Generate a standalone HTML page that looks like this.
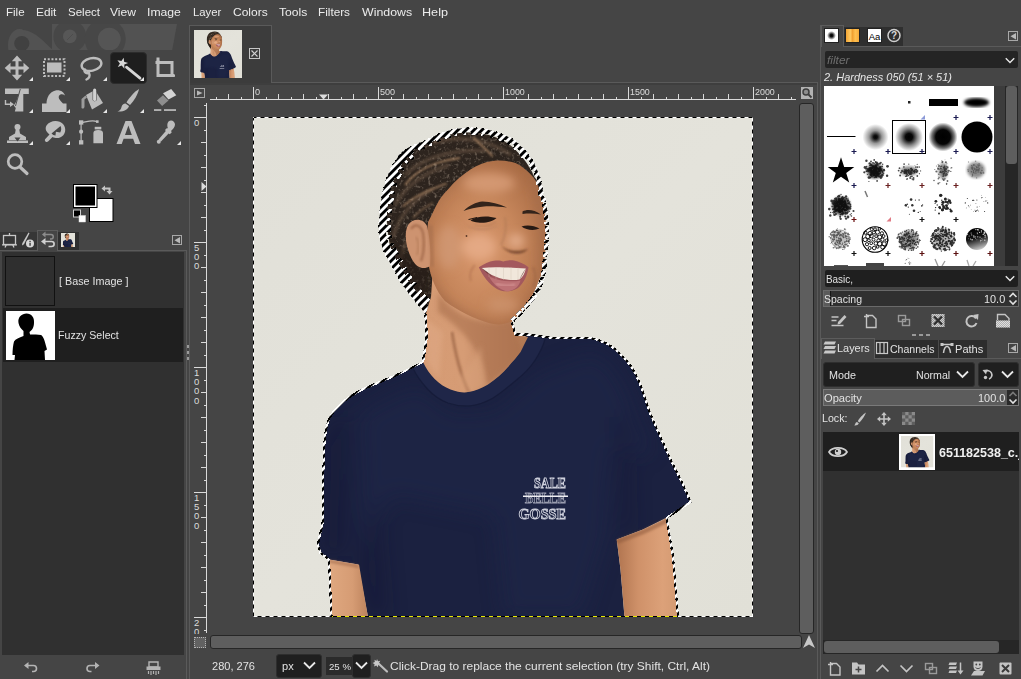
<!DOCTYPE html>
<html><head><meta charset="utf-8"><title>GIMP</title>
<style>
*{box-sizing:border-box;margin:0;padding:0}
html,body{width:1021px;height:679px;overflow:hidden;background:#454545}
body{position:relative;font-family:"Liberation Sans",sans-serif;font-size:12px;color:#e4e4e4}
.a{position:absolute}
.t{position:absolute;white-space:nowrap;line-height:14.6px;font-size:11.4px;color:#e2e2e2}
svg{position:absolute;overflow:visible}
.menu span{position:absolute;top:5px;line-height:14.4px;font-size:11.6px;color:#ececec;white-space:nowrap}
.ic{fill:#bdbdbd}
.st{fill:none;stroke:#bdbdbd}
</style></head><body>
<!-- MENUBAR -->
<div class="a menu" style="left:0;top:0;width:1021px;height:23px">
<span style="transform:scaleX(0.9953);transform-origin:0 0;left:5.5px">File</span><span style="transform:scaleX(1.0208);transform-origin:0 0;left:35.9px">Edit</span><span style="transform:scaleX(0.9927);transform-origin:0 0;left:67.5px">Select</span><span style="transform:scaleX(1.0433);transform-origin:0 0;left:110.2px">View</span><span style="transform:scaleX(1.0517);transform-origin:0 0;left:147.4px">Image</span><span style="transform:scaleX(0.9753);transform-origin:0 0;left:192.9px">Layer</span><span style="transform:scaleX(1.0353);transform-origin:0 0;left:232.8px">Colors</span><span style="transform:scaleX(1.0451);transform-origin:0 0;left:278.9px">Tools</span><span style="transform:scaleX(1.0139);transform-origin:0 0;left:318.4px">Filters</span><span style="transform:scaleX(1.0649);transform-origin:0 0;left:361.6px">Windows</span><span style="transform:scaleX(1.0897);transform-origin:0 0;left:422.4px">Help</span>
</div>
<!-- LEFT PANEL -->
<!-- wilber banner -->
<svg style="left:0;top:23px" width="185" height="30" viewBox="0 23 185 30">
<defs><clipPath id="wb"><polygon points="8,24 177,24 172.200,50 8,50"/></clipPath></defs>
<g clip-path="url(#wb)">
<rect x="52" y="24" width="126" height="26" fill="#525252"/>
<ellipse cx="19.500" cy="45" rx="11.500" ry="16" fill="#525252"/>
<path d="M24,30 C36,32 44,42 54,51 L26,51Z" fill="#525252"/>
<circle cx="21.800" cy="43.500" r="7.600" fill="#414141"/>
<circle cx="69.800" cy="36.400" r="16.400" fill="#474747"/>
<circle cx="69.800" cy="36.400" r="6.800" fill="#575757"/>
<path d="M67,40l6,-6" stroke="#4d4d4d" stroke-width="1"/>
<circle cx="105.200" cy="39.100" r="20.500" fill="#474747"/>
<circle cx="109.300" cy="39.100" r="11.400" fill="#555555"/>
</g></svg>

<!-- selected tool bg -->
<div class="a" style="left:110px;top:52px;width:37px;height:32px;background:#1e1e1e;border-radius:4px;border:1px solid #2c2c2c"></div>

<svg id="tools" style="left:0;top:0" width="185" height="230" viewBox="0 0 185 230">
<g fill="#e6e6e6">
<!-- group triangles -->
<path d="M33,77v4h-4z M70,77v4h-4z M107,77v4h-4z M144,77v4h-4z M175,74.5v2h-1.5z
M33,109v4h-4z M70,109v4h-4z M107,109v4h-4z M144,109v4h-4z
M33,141v4h-4z M70,141v4h-4z M181,141v4h-4z"/>
</g>
<g fill="#bdbdbd" stroke="none">
<!-- 1 move (center 17.5,68) -->
<path d="M17,55.500l5.200,5.800h-3.700v5.200h5v-3.700l5.800,5.200l-5.800,5.200v-3.700h-5v5.200h3.700l-5.200,5.800l-5.200,-5.800h3.700v-5.200h-5v3.700l-5.800,-5.200l5.800,-5.200v3.700h5v-5.200h-3.700z"/>
<!-- 2 rect select (center 54.5,68) -->
<rect x="47" y="62.500" width="14.500" height="10"/>
<path d="M43,58h23v20h-23z M45,60v16h19v-16z" fill-rule="evenodd" fill="none" stroke="#bdbdbd" stroke-width="2" stroke-dasharray="2 1.500" transform="translate(0,0)" style="display:none"/>
</g>
<rect x="44" y="59.200" width="20.500" height="16.800" fill="none" stroke="#bdbdbd" stroke-width="2" stroke-dasharray="2 1.730"/>
<!-- 3 lasso -->
<g fill="none" stroke="#bdbdbd" stroke-width="2.400" stroke-linecap="round">
<ellipse cx="91.500" cy="64.500" rx="10" ry="6.300" transform="rotate(-12 91.500 64.500)"/>
<path d="M85,69.500c-1.500,2.500 1.500,4.500 4,3.500c1.500,3 0,5.500 -2.500,6.500" />
</g>
<!-- 4 fuzzy wand -->
<g>
<polygon points="123.7,57.7 124.1,61.8 128.1,62.9 124.3,64.6 124.4,68.7 121.7,65.6 117.8,67.0 119.9,63.5 117.4,60.2 121.4,61.1" fill="#d6d6d6"/>
<path d="M126.500,67.200l13.500,11" stroke="#d6d6d6" stroke-width="2.800" stroke-linecap="round" fill="none"/>
</g>
<!-- 5 crop -->
<g fill="none" stroke="#bdbdbd" stroke-width="3">
<path d="M158,60v15.500h16.500"/>
<path d="M155.500,62.500h16.500v14" />
</g>
<rect x="156.500" y="57.500" width="3" height="3" fill="#bdbdbd"/>
<!-- 6 unified transform -->
<g fill="#bdbdbd">
<path d="M5,88.600h23.800v5.400h-5.500v17.500h-8.500l1,-3.500l-2,-2.500l2.500,-4l2.500,-7.500h-13.800z"/>
<path d="M20.300,89l-4.800,17" stroke="#454545" stroke-width="0.900" fill="none"/>
<path d="M5.500,100v4.300h5" stroke="#bdbdbd" stroke-width="1.400" fill="none"/>
<path d="M10,101.500l4,2.800l-4,2.800z"/>
</g>
<!-- 7 warp -->
<path d="M42,112v-8.500h4.500c0,-6 3,-11.500 9,-13c4.500,-1 8.500,1.500 9.500,5c-2,-1.800 -5,-1.800 -6,0.300c-1.200,2.500 1.500,5.200 4,7.700h3.500v8.500z" fill="#bdbdbd"/>
<!-- 8 bucket -->
<g fill="#bdbdbd">
<path d="M86,95l9,-5l8,13l-11,6.500z"/>
<rect x="92.600" y="88.300" width="4.100" height="13" rx="1.800" fill="#454545"/><rect x="93.100" y="88.600" width="3.100" height="12.400" rx="1.500" fill="#d2d2d2"/>
<path d="M85.500,95.500l-4,3.500v9c1.500,1.500 3,0 3,-1.500v-7l2.500,-2z" fill="#9c9c9c"/>
</g>
<!-- 9 paintbrush -->
<g fill="#bdbdbd">
<path d="M139,89c-1,5 -5,12 -9,16l-3.500,-2.500c2,-4 8,-11 12.500,-13.500z"/>
<path d="M125.500,103.500l3.500,2.500c-1,3.500 -5.500,6 -11.500,5.500c2.500,-1 3.500,-2.500 4,-4.500c0.500,-2 2,-3.500 4,-3.500z"/>
</g>
<!-- 10 eraser -->
<g>
<path d="M163,93.200l8.200,-4.100l5.100,6.200l-7.800,4.200z" fill="#d4d4d4"/>
<path d="M157,100.400l6,-5.100l5.500,5.100l-6.400,5.500z" fill="#8e8e8e"/>
<rect x="154" y="109.200" width="7.300" height="1.700" fill="#bdbdbd"/><rect x="164" y="109.200" width="12" height="1.700" fill="#bdbdbd"/>
</g>
<!-- 11 clone stamp -->
<g fill="#bdbdbd">
<circle cx="17.500" cy="127" r="3"/>
<path d="M16,128h3l1,5.500l6,3.500v3h-17v-3l6,-3.500z"/>
<path d="M7,142h21v2.500h-21z" transform="translate(0,-1.500)"/>
<path d="M14.500,137.500h6l-3,4z" fill="#454545"/>
</g>
<!-- 12 smudge / dodge -->
<g fill="#bdbdbd">
<path d="M46.500,125.500c3.500,-5.500 12.500,-6 16.500,-1.500c4,4.500 2.500,11.500 -3,13.500c-2.500,1 -5.500,0.500 -7.500,-0.500l-4.500,4.500c-1.500,1.500 -4.200,-0.800 -2.700,-2.600l4.200,-4.400c-3,-2.500 -5,-5.500 -3,-9z"/>
<path d="M51.500,133.500l9,-7.500c1.200,2.200 0.800,4.800 -0.300,6.500l-4.300,-0.700l-0.400,3.700c-1.600,0 -2.900,-0.900 -4,-2z" fill="#454545"/>
</g>
<!-- 13 paths -->
<g fill="#bdbdbd">
<rect x="79" y="120.300" width="4.300" height="4.300"/>
<rect x="79" y="140.200" width="4.300" height="4.300"/>
<circle cx="81.100" cy="131.700" r="2.100"/>
<path d="M81.100,124v17" stroke="#bdbdbd" stroke-width="1.200"/>
<path d="M83,122.300c5,-1 10,-2.500 13.500,-0.800" fill="none" stroke="#bdbdbd" stroke-width="1.300"/>
<rect x="96" y="120.300" width="2.600" height="2.600"/>
<rect x="94.700" y="126.800" width="6.600" height="2.600"/>
<path d="M93.400,133c0,-2 1.500,-3 4.800,-3s4.800,1 4.800,3v10.300h-9.600z"/>
</g>
<!-- 14 text A -->
<path d="M125.500,121h6l9,23h-5.500l-1.900,-5.300h-9.500l-1.900,5.300h-5.200z M128.400,125.500l-3.400,9.400h6.800z" fill="#bdbdbd" fill-rule="evenodd"/>
<!-- 15 color picker -->
<g fill="#bdbdbd">
<path d="M168.500,121.500c2.500,-2.500 6.500,-0.500 6.500,3c0,2.500 -2,4.500 -4,6.500l0.800,1.200l-2,2l-1.200,-0.800l-7.600,8.100l-2.500,-2l7.300,-8.400l-0.800,-1.200l2,-2l1,0.600c-1,-2.500 -1,-5 0.500,-7z"/>
<circle cx="158.800" cy="141.800" r="2"/>
</g>
<!-- 16 zoom -->
<g fill="none" stroke="#bdbdbd">
<circle cx="15" cy="161.500" r="6.800" stroke-width="2.700"/>
<path d="M20,167l7,6.500" stroke-width="3.200" stroke-linecap="round"/>
</g>

<!-- fg/bg -->
<rect x="89" y="198" width="24.500" height="24" fill="#000"/>
<rect x="90" y="199" width="22.500" height="22" fill="#fff"/>
<rect x="73" y="184" width="24.500" height="24" fill="#000"/>
<rect x="74" y="185" width="22.500" height="22" fill="#fff"/>
<rect x="75.500" y="186.500" width="19.500" height="19" fill="#000"/>
<rect x="73.500" y="210" width="7" height="7" fill="#000" stroke="#cfcfcf" stroke-width="1"/>
<rect x="79" y="215.500" width="6.500" height="6.500" fill="#fff" stroke="#dcdcdc" stroke-width="0.500"/>
<g fill="#c4c4c4">
<path d="M101.500,188.500l3.500,-3v2h5.500v3.500h2l-3,3.500l-3,-3.500h2v-1.500h-3.500v2z"/>
</g>
</svg>

<!-- dock tabs -->
<div class="a" style="left:0;top:232px;width:37px;height:18px;background:#363636"></div>
<div class="a" style="left:58px;top:232px;width:21px;height:18px;background:#2f2f2f"></div>
<div class="a" style="left:0;top:250px;width:187px;height:1px;background:#5a5a5a"></div>
<div class="a" style="left:37px;top:230px;width:21px;height:21px;background:#454545;border:1px solid #5c5c5c;border-bottom:none"></div>
<svg style="left:0;top:228px" width="185" height="24" viewBox="0 228 185 24">
<!-- tool options -->
<g fill="none" stroke="#c8c8c8" stroke-width="1.300">
<rect x="3.500" y="235.500" width="12" height="9"/>
<path d="M5,247.500l1.500,-3 M14,247.500l-1.500,-3 M2,244.800h15 M9.500,235v-2"/>
</g>
<!-- device status -->
<path d="M28.500,232.500l1,0.800l-5.500,11l-2,1.200l0.300,-2.300z" fill="#c8c8c8"/>
<circle cx="30" cy="243.500" r="4" fill="#d8d8d8"/>
<rect x="29.400" y="242.800" width="1.300" height="3" fill="#333"/><rect x="29.400" y="240.800" width="1.300" height="1.300" fill="#333"/>
<!-- undo history -->
<g fill="none" stroke="#8c8c8c" stroke-width="1.500">
<path d="M45,234.500h6c3,0 3,4.500 0,4.500h-1"/>
</g>
<path d="M45.500,231.500v6l-3.500,-3z" fill="#8c8c8c"/>
<g fill="none" stroke="#d0d0d0" stroke-width="1.600">
<path d="M44,241.500h7.500c3.500,0 3.500,5 0,5h-3"/>
</g>
<path d="M45.500,238v7l-4.500,-3.500z" fill="#d0d0d0"/>
<!-- images tab thumb -->
<svg x="61" y="233" width="14" height="14" viewBox="0 0 500 500"><use href="#pic"/></svg>
<!-- menu btn -->
<rect x="172.500" y="235.500" width="9" height="9" fill="none" stroke="#a8a8a8" stroke-width="1"/>
<path d="M180,237v6.500l-5.500,-3.250z" fill="#b8b8b8"/>
</svg>

<!-- undo list -->
<div class="a" style="left:2px;top:252px;width:182px;height:403px;background:#303030"></div>
<div class="a" style="left:5px;top:256px;width:50px;height:50px;background:#2f2f2f;border:1px solid #111"></div>
<div class="t" style="transform:scaleX(0.9462);transform-origin:0 0;left:58.800px;top:273.600px">[ Base Image ]</div>
<div class="a" style="left:3px;top:308px;width:180px;height:54px;background:#1f1f1f"></div>
<svg style="left:5.500px;top:311px" width="49" height="49" viewBox="0 0 49 49">
<rect width="49" height="49" fill="#fff"/>
<path d="M12.500,12c-1,-6 3.500,-9.500 8,-9.500c5,0 8,4 7.500,9c0,4 -1,7 -4.500,9.500l0.500,2.500c4,0 8,-0.500 11,0.500c3,1.500 4.500,9 6,14.500l-2.500,1.500l0.500,9h-30.500l0.500,-5h-2.500c0,-5 0.500,-10 1.500,-13.500c1.500,-2.500 5,-4 9.500,-5.500l0,-5c-2.500,-2 -4.500,-5 -5,-8z" fill="#000"/>
</svg>
<div class="t" style="transform:scaleX(0.9325);transform-origin:0 0;left:57.6px;top:328.3px">Fuzzy Select</div>

<!-- bottom buttons -->
<svg style="left:0;top:656px" width="185" height="23" viewBox="0 656 185 23">
<g fill="none" stroke="#b4b4b4" stroke-width="1.600">
<path d="M27,665.500h6.500c4,0 4,6 0,6h-1.500"/>
<path d="M96.500,665.500h-6.500c-4,0 -4,6 0,6h1.500" />
</g>
<path d="M28.500,662v7l-4.500,-3.500z M95,662v7l4.500,-3.500z" fill="#b4b4b4"/>
<g fill="#b4b4b4">
<path d="M149,662h9v5h-9z" fill="none" stroke="#b4b4b4" stroke-width="1.400"/>
<rect x="146.500" y="666.500" width="14" height="3.500"/>
<path d="M148.500,671v3 M151,671v4 M153.500,671v3 M156,671v4 M158.500,671v3" stroke="#b4b4b4" stroke-width="1.200"/>
</g>
</svg>

<!-- separator -->
<div class="a" style="left:186px;top:250px;width:1px;height:429px;background:#5a5a5a"></div>
<div class="a" style="left:189px;top:25px;width:1px;height:654px;background:#5a5a5a"></div>
<div class="a" style="left:187px;top:345px;width:2px;height:3px;background:#9a9a9a"></div>
<div class="a" style="left:187px;top:351px;width:2px;height:3px;background:#9a9a9a"></div>
<div class="a" style="left:187px;top:357px;width:2px;height:3px;background:#9a9a9a"></div>

<!-- CENTER -->
<!-- image tab -->
<div class="a" style="left:189px;top:25px;width:83px;height:59px;background:#3c3c3c;border:1px solid #5a5a5a;border-bottom:none"></div>
<div class="a" style="left:271px;top:82px;width:547px;height:1px;background:#5a5a5a"></div>
<div class="a" style="left:190px;top:83px;width:628px;height:2px;background:#3e3e3e"></div>
<svg style="left:194px;top:30px" width="48" height="48" viewBox="0 0 500 500"><use href="#pic"/></svg>
<svg style="left:249px;top:48px" width="12" height="12" viewBox="0 0 12 12"><rect x="0.5" y="0.5" width="10" height="10" fill="none" stroke="#c6c6c6" stroke-width="1"/><path d="M2.5,2.5l6,6M8.5,2.5l-6,6" stroke="#d0d0d0" stroke-width="1.200"/></svg>

<!-- rulers -->
<svg style="left:190px;top:85px" width="628" height="550" viewBox="190 85 628 550" shape-rendering="crispEdges">
<rect x="194.500" y="88.500" width="10" height="9" fill="none" stroke="#a8a8a8"/>
<path d="M197,90.500l5.500,2.500l-5.500,2.500z" fill="#b8b8b8" shape-rendering="auto"/>
<path d="M210,99.5h586" stroke="#dadada" stroke-width="1"/>
<path d="M216.0,96.500v3.500 M228.5,94v6 M241.0,96.500v3.500 M253.5,87v13 M266.0,96.500v3.500 M278.5,94v6 M291.0,96.500v3.500 M303.5,94v6 M316.0,96.500v3.500 M328.5,94v6 M341.0,96.500v3.500 M353.5,94v6 M366.0,96.500v3.500 M378.5,87v13 M391.0,96.500v3.500 M403.5,94v6 M416.0,96.500v3.500 M428.5,94v6 M441.0,96.500v3.500 M453.5,94v6 M466.0,96.500v3.500 M478.5,94v6 M491.0,96.500v3.500 M503.5,87v13 M516.0,96.500v3.500 M528.5,94v6 M541.0,96.500v3.500 M553.5,94v6 M566.0,96.500v3.500 M578.5,94v6 M591.0,96.500v3.500 M603.5,94v6 M616.0,96.500v3.500 M628.5,87v13 M641.0,96.500v3.500 M653.5,94v6 M666.0,96.500v3.500 M678.5,94v6 M691.0,96.500v3.500 M703.5,94v6 M716.0,96.500v3.500 M728.5,94v6 M741.0,96.500v3.500 M753.5,87v13 M766.0,96.500v3.500 M778.5,94v6 M791.0,96.500v3.500 " stroke="#dadada" stroke-width="1"/>
<path d="M206.500,103v530" stroke="#dadada" stroke-width="1"/>
<path d="M203.500,105.0h3.500 M194,117.5h13 M203.500,130.0h3.500 M201,142.5h6 M203.500,155.0h3.500 M201,167.5h6 M203.500,180.0h3.500 M201,192.5h6 M203.500,205.0h3.500 M201,217.5h6 M203.500,230.0h3.500 M194,242.5h13 M203.500,255.0h3.500 M201,267.5h6 M203.500,280.0h3.500 M201,292.5h6 M203.500,305.0h3.500 M201,317.5h6 M203.500,330.0h3.500 M201,342.5h6 M203.500,355.0h3.500 M194,367.5h13 M203.500,380.0h3.500 M201,392.5h6 M203.500,405.0h3.500 M201,417.5h6 M203.500,430.0h3.500 M201,442.5h6 M203.500,455.0h3.500 M201,467.5h6 M203.500,480.0h3.500 M194,492.5h13 M203.500,505.0h3.500 M201,517.5h6 M203.500,530.0h3.500 M201,542.5h6 M203.500,555.0h3.500 M201,567.5h6 M203.500,580.0h3.500 M201,592.5h6 M203.500,605.0h3.500 M194,617.5h13 M203.500,630.0h3.500 " stroke="#dadada" stroke-width="1"/>
<path d="M319,94.500h9l-4.500,5z" fill="#dcdcdc" shape-rendering="auto"/>
<path d="M201.5,182v9l5,-4.5z" fill="#dcdcdc" shape-rendering="auto"/>
<!-- zoom btn -->
<rect x="801" y="87" width="12" height="12" fill="#b2b2b2"/><circle cx="806" cy="92" r="2.5" fill="#8c8c8c"/>
<circle cx="806" cy="92" r="3" fill="none" stroke="#3c3c3c" stroke-width="1.500" shape-rendering="auto"/>
<path d="M808.500,94.500l3,3" stroke="#3c3c3c" stroke-width="1.800" shape-rendering="auto"/>
</svg>
<div class="t" style="transform:scaleX(0.9628);transform-origin:0 0;left:255.2px;top:85.6px;font-size:9.5px;line-height:12px;color:#dcdcdc">0</div>
<div class="t" style="transform:scaleX(0.9521);transform-origin:0 0;left:380.2px;top:85.6px;font-size:9.5px;line-height:12px;color:#dcdcdc">500</div>
<div class="t" style="transform:scaleX(0.9366);transform-origin:0 0;left:505.2px;top:85.6px;font-size:9.5px;line-height:12px;color:#dcdcdc">1000</div>
<div class="t" style="transform:scaleX(0.9366);transform-origin:0 0;left:630.2px;top:85.6px;font-size:9.5px;line-height:12px;color:#dcdcdc">1500</div>
<div class="t" style="transform:scaleX(0.9366);transform-origin:0 0;left:755.2px;top:85.6px;font-size:9.5px;line-height:12px;color:#dcdcdc">2000</div>
<div class="t vr" style="left:193.200px;top:117.9px">0</div>
<div class="t vr" style="left:193.200px;top:242.9px">5<br>0<br>0</div>
<div class="t vr" style="left:193.200px;top:367.9px">1<br>0<br>0<br>0</div>
<div class="t vr" style="left:193.200px;top:492.9px">1<br>5<br>0<br>0</div>
<div class="t vr" style="left:193.200px;top:617.9px;height:16.500px;overflow:hidden">2<br>0</div>
<style>.vr{font-size:9.5px;line-height:9.2px;color:#dcdcdc;text-align:center;width:7px}</style>

<!-- v scrollbar -->
<div class="a" style="left:799px;top:103px;width:15px;height:531px;background:#5e5e5e;border:1px solid #262626;border-radius:3px"></div>
<!-- h scrollbar -->
<div class="a" style="left:210px;top:635px;width:592px;height:14px;background:#5e5e5e;border:1px solid #262626;border-radius:3px"></div>
<div class="a" style="left:194px;top:637px;width:12px;height:11px;background:#626262;border:1px dotted #b4b4b4"></div>
<svg style="left:802px;top:634px" width="14" height="15" viewBox="0 0 14 15"><path d="M7,1l6,13l-6,-3.500l-6,3.500z" fill="#c8c8c8"/></svg>

<!-- status bar -->
<div class="t" style="transform:scaleX(0.9697);transform-origin:0 0;left:211.500px;top:659px">280, 276</div>
<div class="a" style="left:276px;top:654px;width:46px;height:24px;background:#1f1f1f;border:1px solid #2e2e2e;border-radius:3px"></div>
<div class="t" style="transform:scaleX(0.9725);transform-origin:0 0;left:281.800px;top:659px">px</div>
<svg style="left:303px;top:661px" width="13" height="9" viewBox="0 0 13 9"><path d="M1,1.500l5.500,5.500l5.500,-5.500" fill="none" stroke="#e8e8e8" stroke-width="1.800"/></svg>
<div class="a" style="left:326px;top:657px;width:26px;height:18px;background:#2b2b2b"></div>
<div class="t" style="transform:scaleX(1.0159);transform-origin:0 0;left:328.500px;top:659.600px;font-size:9.500px">25 %</div>
<div class="a" style="left:352px;top:654px;width:19px;height:24px;background:#1f1f1f;border:1px solid #2e2e2e;border-radius:3px"></div>
<svg style="left:355px;top:661px" width="13" height="9" viewBox="0 0 13 9"><path d="M1,1.500l5.500,5.500l5.500,-5.500" fill="none" stroke="#e8e8e8" stroke-width="1.800"/></svg>
<svg style="left:373px;top:658px" width="16" height="16" viewBox="0 0 16 16"><path d="M4,1l1,2.200l2.300,-0.400l-1.200,2l1.600,1.800l-2.400,0.300l-0.400,2.300l-1.600,-1.700l-2.200,1l0.500,-2.300l-2,-1.200l2.200,-1l-0.300,-2.300l2,1.200z" fill="#c8c8c8"/><path d="M6.500,6.500l7.500,7" stroke="#bdbdbd" stroke-width="2.200" stroke-linecap="round"/></svg>
<div class="t" style="transform:scaleX(1.0510);transform-origin:0 0;left:390.300px;top:659px">Click-Drag to replace the current selection (try Shift, Ctrl, Alt)</div>
<!-- PHOTO -->
<svg id="photo" style="left:253px;top:117px" width="500" height="500" viewBox="0 0 500 500">
<defs>
<clipPath id="pc"><rect width="500" height="500"/></clipPath>
<clipPath id="hairOC"><path d="M217.500,11 C208,11 201,12 195,14 C188,16 181,19 175,22.500 C167,26 161,28 155,31 C149,35 145,39 142.500,44 C138,51 135,58 132.500,65 C130,73 128.500,82 127.500,90 C126.500,98 126,107 126,115 C127,123 129,131 132.500,137 C135,143 139,149 142.500,155 C146,162 150,169 155,175 C159,181 164,186 167.500,190 L172.500,197.500 L178,180 L180,150 L200,110 L290,80 C290,72 288,63 285,55 C282,48 279,42 275,37.500 C271,32 266,27 260,22.500 C254,19 247,16 240,14 C233,12 225,11 217.500,11 Z"/></clipPath>
<filter id="pb1" x="-10%" y="-10%" width="120%" height="120%"><feGaussianBlur stdDeviation="1"/></filter>
<filter id="pb2" x="-20%" y="-20%" width="140%" height="140%"><feGaussianBlur stdDeviation="2.500"/></filter>
<filter id="pb4" x="-30%" y="-30%" width="160%" height="160%"><feGaussianBlur stdDeviation="5"/></filter>
<filter id="pb8" x="-30%" y="-30%" width="160%" height="160%"><feGaussianBlur stdDeviation="10"/></filter>
<pattern id="ants" width="8" height="8" patternUnits="userSpaceOnUse">
<rect width="8" height="8" fill="#fff"/>
<path d="M-2,2l4,-4h4l-8,8z M0,8l8,-8v4l-4,4z M6,10l4,-4v4z" fill="#000"/>
</pattern>
<pattern id="antsy" width="8" height="8" patternUnits="userSpaceOnUse">
<rect width="8" height="8" fill="#e8e800"/>
<rect width="4" height="8" fill="#000"/>
</pattern>
<linearGradient id="bgG" x1="0" y1="0" x2="1" y2="1"><stop offset="0" stop-color="#e1e0d8"/><stop offset="0.500" stop-color="#e4e3db"/><stop offset="1" stop-color="#e1e0d7"/></linearGradient>
<linearGradient id="armR" x1="0" x2="1"><stop offset="0" stop-color="#b0744f"/><stop offset="0.350" stop-color="#cf9169"/><stop offset="0.750" stop-color="#dca179"/><stop offset="1" stop-color="#d39a72"/></linearGradient>
<linearGradient id="armL" x1="0" x2="1"><stop offset="0" stop-color="#dfa880"/><stop offset="0.600" stop-color="#d69c74"/><stop offset="1" stop-color="#bd835d"/></linearGradient>
<linearGradient id="neckG" x1="0" x2="1"><stop offset="0" stop-color="#d59b74"/><stop offset="0.400" stop-color="#d69c75"/><stop offset="0.800" stop-color="#bd8460"/><stop offset="1" stop-color="#b07853"/></linearGradient>
<radialGradient id="faceG" cx="0.450" cy="0.550" r="0.650"><stop offset="0" stop-color="#da996f"/><stop offset="0.500" stop-color="#c6865b"/><stop offset="1" stop-color="#a56842"/></radialGradient>
</defs>
<g id="pic" clip-path="url(#pc)">
<rect width="500" height="500" fill="url(#bgG)"/>

<!-- shirt -->
<path id="shirt" d="M170,245 C160,250 150,255 145,257.500 L112.500,271 C100,277 90,284 85,290 C79,296 76,300 75,305 C72,315 71.500,322 71.250,330 L70,365 L70,402.500 C69,412 66,420 65,427.500 L67.500,436 L76,442.500 L105,447.500 L115,500 L371.500,500 L367.500,452.500 L363.750,422.500 L390,412.500 L415,400 L437.500,385 L430,367.500 L417.500,342.500 L407.500,320 L397.500,297.500 L390,275 C387,266 384,259 380,252.500 C375,245 370,239 365,235 C360,230 355,227 350,225 C345,222.500 340,221 335,221 L300,221 L275,217.500 L262,228 L235,262 L215,272 L195,268 L178,255 Z" fill="#1b2140"/>
<!-- shirt shading -->
<clipPath id="shirtC"><use href="#shirt"/></clipPath>
<g clip-path="url(#shirtC)"><g filter="url(#pb8)" opacity="0.380">
<path d="M105,300 C120,285 150,275 165,268 L200,295 L240,292 L285,255 L340,235 C360,245 372,265 380,290 L400,340 L360,330 L355,420 L330,500 L250,500 L240,400 L140,380 L110,440 Z" fill="#222a4e"/>
<path d="M70,330 L80,300 L95,300 L92,440 L68,436Z" fill="#141930"/>
<path d="M362,300 L368,420 L380,415 L375,300Z" fill="#131830"/>
<path d="M106,447 L125,380 L135,500 L115,500Z" fill="#131830"/>
</g></g>
<!-- collar band -->
<path d="M170,245 C176,258 186,268 197.500,272.500 C205,275.500 212,276 215,275 C222,274 229,271 235,267.500 C243,262 250,256 255,250 C260,244 264,240 267.500,235 L275,220 L292,222 C290,230 286,237 282.500,242.500 C277,251 270,258 262.500,263.750 C255,270 247,277 240,281 C233,285 225,288 217.500,288.750 C209,289.500 201,288 195,286 C187,283 180,278 175,272.500 C169,266 163,258 160,251 Z" fill="#1f2648"/>
<path d="M160,251 C163,258 169,266 175,272.500 C180,278 187,283 195,286 C201,288 209,289.500 217.500,288.750 C225,288 233,285 240,281 C247,277 255,270 262.500,263.750 C270,258 277,251 282.500,242.500 C286,237 290,230 292,222" fill="none" stroke="#141a36" stroke-width="1.200" opacity="0.700"/>

<!-- arms -->
<path d="M76,442.500 L105,447.500 L106,447.500 L115,500 L78.500,500 Z" fill="url(#armL)"/>
<path d="M363.750,422.500 L390,412.500 L413.750,401 L420,440 L425,500 L371.500,500 L367.500,452.500 Z" fill="url(#armR)"/>
<path d="M363.750,422.500 L390,412.500 L413.750,401 L414.500,406 L391,417 L364.500,427Z" fill="#8e5a3c" opacity="0.550" filter="url(#pb1)"/>
<path d="M76,442.500 L105,447.500 L105.500,451 L76.500,446Z" fill="#9a6446" opacity="0.500" filter="url(#pb1)"/>

<!-- neck -->
<path d="M167.500,190 L172.500,197.500 L173.750,220 L170,245 C176,258 186,268 197.500,272.500 C205,275.500 212,276 215,275 C222,274 229,271 235,267.500 C243,262 250,256 255,250 C260,244 264,240 267.500,235 L275,220 L262.500,217.500 L258.750,203 L240,170 L175,150 Z" fill="url(#neckG)"/>
<clipPath id="neckC"><path d="M167.500,190 L172.500,197.500 L173.750,220 L170,245 C176,258 186,268 197.500,272.500 C205,275.500 212,276 215,275 C222,274 229,271 235,267.500 C243,262 250,256 255,250 C260,244 264,240 267.500,235 L275,220 L262.500,217.500 L258.750,203 L240,170 L175,150 Z"/></clipPath>
<g clip-path="url(#neckC)">
<path d="M185,175 C200,200 235,212 262,203 L264,218 L270,234 C258,250 246,260 234,268 C232,240 214,215 185,195Z" fill="#a86e4b" opacity="0.600" filter="url(#pb2)"/>
<path d="M199,215 C202,235 206,255 216,275" fill="none" stroke="#9a6444" stroke-width="3" opacity="0.700" filter="url(#pb1)"/>
<path d="M170,200 L174,245 L186,262 L190,215Z" fill="#dfa985" opacity="0.600" filter="url(#pb2)"/>
<path d="M205,262 C215,250 222,240 228,228 L232,268 L215,278Z" fill="#d9a27c" opacity="0.500" filter="url(#pb2)"/>
</g>

<!-- hair silhouette -->
<path id="hair" d="M216.6,15.5 C205,15.5 190,18 174.5,24 C165,29 157,35 151.5,41.3 C143,52 137,66 135,79.6 C133,95 133.5,112 137,128 C140,140 146,152 153,163 C158,171 164,180 170,188 L172.5,197.5 L178,180 L180,150 L200,110 L290,80 C289,72 286,65 281.7,60.5 C278,52 274,46 270,41.3 C264,34 258,28 251,24 C240,18 228,15.5 216.6,15.5 Z" fill="#2d241e"/>
<clipPath id="hairC"><use href="#hair"/></clipPath>
<g clip-path="url(#hairC)">
<!-- hair texture -->
<filter id="hairT" x="0" y="0" width="100%" height="100%"><feTurbulence type="fractalNoise" baseFrequency="0.32" numOctaves="2" seed="4" result="n"/><feColorMatrix in="n" type="matrix" values="0 0 0 0 0.40  0 0 0 0 0.32  0 0 0 0 0.25  1.5 1.5 0 0 -1.55"/></filter>
<rect x="120" y="5" width="180" height="200" filter="url(#hairT)" opacity="0.7"/>
<!-- braid highlights -->
<g fill="none" stroke="#6e5946" stroke-width="4" opacity="0.5" filter="url(#pb1)">
<path d="M140,120 C146,100 158,84 180,72"/>
<path d="M142,88 C152,70 170,56 196,48"/>
<path d="M152,58 C170,40 200,32 232,34"/>
<path d="M180,26 C205,18 235,22 258,38"/>
<path d="M146,150 C148,134 154,120 166,108"/>
</g>
<!-- part lines (scalp) -->
<g fill="none" stroke="#b08a68" stroke-width="1.8" opacity="0.85" filter="url(#pb1)">
<path d="M207,41 C198,42 190,44 184,46 C176,49 170,52 165,55.5 C160,59 155,64 152,68"/>
<path d="M193.6,66.5 C184,70 174,74 165,78.7 C159,82 154,86 149.6,89.5"/>
<path d="M239.6,39.4 C236,35 232,31.500 228,28 C225,25 222.500,22.500 220.4,20"/>
<path d="M180,86 C172,90 165,95 160,101" opacity="0.6"/>
</g>
<path d="M126,115 C130,150 150,178 170,195 L180,150 L160,140Z" fill="#271e19" opacity="0.6" filter="url(#pb2)"/>
</g>

<!-- face -->
<path id="face" d="M175,105 C178,100 180,95 182.500,90 C186,83 190,77 195,72.500 C201,65 209,58 217.500,52.500 C224,48 232,45 240,44 C248,43 256,44 262.500,46 C269,49 275,54 280,60 C283,64 285,68 286,72.500 C289,80 290.500,88 291.500,95 C292.500,102 293,106 292.500,112.500 C293,120 293,130 291.600,139 C291,147 289,158 285,165.600 C282,175 276,184 270.400,192 C266,197 262,201 257,205 C250,208 243,208 236,206 C222,202 205,194 192,184 C183,174 178,160 176,150 L174,125 Z" fill="url(#faceG)"/>
<clipPath id="faceC"><use href="#face"/></clipPath>
<g clip-path="url(#faceC)">
<g filter="url(#pb4)">
<path d="M175,150 C182,180 210,200 250,210 L262,206 L290,160 L292,100 L300,100 L300,220 L170,220Z" fill="#a46b4a" opacity="0.750"/>
<path d="M276,55 L296,60 L296,150 L284,175 C288,150 288,100 276,55Z" fill="#a56d4c" opacity="0.700"/>
<ellipse cx="236" cy="66" rx="26" ry="10" fill="#d99f79" opacity="0.800"/>
<ellipse cx="226" cy="130" rx="17" ry="13" fill="#e6ab86" opacity="0.900"/>
<ellipse cx="196" cy="130" rx="12" ry="22" fill="#d29a76" opacity="0.700"/>
<ellipse cx="263" cy="124" rx="8" ry="7" fill="#e6b090" opacity="0.900"/>
<ellipse cx="250" cy="188" rx="16" ry="8" fill="#cf9670" opacity="0.700"/>
<path d="M180,95 C190,78 205,62 225,50 L200,55 L175,100Z" fill="#a9724f" opacity="0.600"/>
</g>
<g filter="url(#pb1)">
<path d="M212,108 C222,112 236,112 246,108 C240,114 222,116 212,108Z" fill="#b67e5c" opacity="0.500"/>
<path d="M248,128 C252,133 262,136 275,132 C270,139 255,139 248,128Z" fill="#6e3f28" opacity="0.850"/>
<path d="M252,100 C254,110 252,120 248,128" fill="none" stroke="#b27a58" stroke-width="2.500" opacity="0.500"/>
<path d="M222,148 C218,152 216,158 218,164" fill="none" stroke="#b0724f" stroke-width="2" opacity="0.600"/>
<path d="M280,150 C283,156 283,164 280,170" fill="none" stroke="#9a6242" stroke-width="2" opacity="0.600"/>
</g>
</g>
<!-- ear -->
<path d="M155,108 C160,101 170,101 174,109 C177,120 178,135 177,149 C171,153 164,151 160,144 C154,134 150,118 155,108Z" fill="#cd9370"/>
<path d="M158,112 C162,106 168,108 170,116 C171.500,126 171,136 168,144" fill="none" stroke="#9c6445" stroke-width="2.200" opacity="0.800" filter="url(#pb1)"/>
<path d="M163,120 C166,124 166,132 164,138" fill="none" stroke="#b07855" stroke-width="1.500" opacity="0.800" filter="url(#pb1)"/>
<path d="M174,109 C176,120 178,135 177,149 L181,150 L180,108Z" fill="#a9714f" opacity="0.600" filter="url(#pb1)"/>
<!-- brows, eyes -->
<path d="M210.500,94 C216,88.500 223,85 229.500,84.500 C238,84.500 246,87 254,90.500 C247,90 239,89 231,89.500 C223,90 216,92 210.500,94Z" fill="#33241b"/>
<path d="M269.500,94.500 C274,92 281,92.500 288,97.500 C282,96.500 276,96.300 269.500,97Z" fill="#33241b"/>
<path d="M217.500,103.500 C223,99.500 233,98 243.500,101 C240,104.500 232,106.500 225,105.500 C222,105.200 219.500,104.500 217.500,103.500Z" fill="#261a14"/>
<path d="M215.500,102.500 C218,102 221,101.500 224,100.500" stroke="#261a14" stroke-width="1.100" fill="none"/>
<path d="M268.500,109.500 C274,107.500 281,108.500 286.500,111.500 C281,114 273,113 268.500,109.500Z" fill="#261a14"/>
<path d="M221,107.500 C228,110 236,109.500 243,105" stroke="#a87250" stroke-width="1.200" fill="none" opacity="0.600" filter="url(#pb1)"/>
<!-- mouth -->
<path d="M225.800,150.200 C231,147 236,144.500 241,143.800 C245,143.200 248,143.600 250.600,144.600 C253,143.600 257,143 261,143.600 C266,144.500 271,147 275.500,150.200 C274.500,158 271,166 265,171 C259,175 250,175.500 244,172 C236,167 229.500,158.500 225.800,150.200Z" fill="#a3585d"/>
<path d="M228.700,151 C236,150 244,150 251,150.400 C259,150.600 266,151 272.800,151.600 C272,156 270,160 266.500,162.500 C256,164.500 240,161.500 228.700,151Z" fill="#f1e7db"/>
<path d="M228.700,151 C232,155 236,158 240,160 C236,156 232,153 228.700,151Z M272.800,151.600 C271,155 269,159 266.500,162.500 C268,159 270,155 272.800,151.600Z" fill="#5a2e2c" opacity="0.700"/>
<path d="M236,159.500 C246,164 258,165.500 267.500,163.500 C266,169.500 261,173.800 254,174.500 C246,172.500 240,167 236,159.500Z" fill="#bd7275"/>
<path d="M243,166.500 C249,169 256,169.500 262,167.500" stroke="#e2a6a4" stroke-width="1.500" fill="none" opacity="0.800" filter="url(#pb1)"/>
<path d="M236,150 V160 M243,150 V162 M250.500,150 V163 M258,150 V163 M265,150.500 V162" stroke="#cdbfae" stroke-width="0.500" opacity="0.700"/>
<circle cx="213.500" cy="119" r="0.900" fill="#5a3826"/>

<!-- shirt print -->
<g font-family="Liberation Serif" font-weight="bold" font-size="15" fill="#1b2140" stroke="#d9dbe6" stroke-width="0.900" opacity="0.950" text-anchor="end">
<text x="313" y="370.500" textLength="32" lengthAdjust="spacingAndGlyphs">SALE</text>
<text x="313" y="385.500" textLength="41" lengthAdjust="spacingAndGlyphs" opacity="0.700">BELLE</text>
<text x="313" y="402" textLength="47.500" lengthAdjust="spacingAndGlyphs">GOSSE</text>
</g>
<rect x="270" y="378.500" width="45" height="1.500" fill="#f0f0f4"/>
</g>

<!-- marching ants -->
<g fill="none" stroke="url(#ants)" shape-rendering="crispEdges">
<!-- hair: thick ragged band -->
<g clip-path="url(#hairOC)">
<path d="M172.500,197.500 L167.500,190 C164,186 159,181 155,175 C150,169 146,162 142.500,155 C139,149 135,143 132.500,137 C129,131 127,123 126,115 C126,107 126.500,98 127.500,90 C128.500,82 130,73 132.500,65 C135,58 138,51 142.500,44 C145,39 149,35 155,31" stroke-width="14"/>
<path d="M172.500,197.500 L167.500,190 C164,186 159,181 155,175 C150,169 146,162 142.500,155 C139,149 135,143 132.500,137 C129,131 127,123 126,115 C126,107 126.500,98 127.500,90 C128.500,82 130,73 132.500,65 C135,58 138,51 142.500,44 C145,39 149,35 155,31" stroke-width="24" stroke-dasharray="4 5 7 4 3 6"/>
<path d="M155,31 C161,28 167,26 175,22.500 C181,19 188,16 195,14 C201,12 208,11 217.500,11 C225,11 233,12 240,14 C247,16 254,19 260,22.500 C266,27 271,32 275,37.500" stroke-width="8"/>
<path d="M155,31 C161,28 167,26 175,22.500 C181,19 188,16 195,14 C201,12 208,11 217.500,11 C225,11 233,12 240,14 C247,16 254,19 260,22.500 C266,27 271,32 275,37.500" stroke-width="14" stroke-dasharray="4 5 7 4 3 6"/>
<path d="M275,37.500 C279,42 282,48 285,55 C288,63 290,72 290,80" stroke-width="6"/>
<path d="M275,37.500 C279,42 282,48 285,55 C288,63 290,72 290,80" stroke-width="10" stroke-dasharray="4 5 7 4 3 6"/>
</g>
<path d="M172.500,197.500 L167.500,190 C164,186 159,181 155,175 C150,169 146,162 142.500,155 C139,149 135,143 132.500,137 C129,131 127,123 126,115 C126,107 126.500,98 127.500,90 C128.500,82 130,73 132.500,65 C135,58 138,51 142.500,44 C145,39 149,35 155,31 C161,28 167,26 175,22.500 C181,19 188,16 195,14 C201,12 208,11 217.500,11 C225,11 233,12 240,14 C247,16 254,19 260,22.500 C266,27 271,32 275,37.500 C279,42 282,48 285,55 C288,63 290,72 290,80" stroke-width="1.500" stroke-dasharray="2 3 1 4 3 2"/>
<path d="M290,80 L292.500,95 C293.500,102 294,108 294,115 C294,122 293.500,128 292.500,135 C292,141 291.500,147 291,152.500 C290,160 288,167 285,172.500 C282,179 277,185 272.500,190 C268,195 264,199 260,202.500 L258.750,205" stroke-width="4.500" stroke-dasharray="5 1.500 3 1 6 2"/>
<path d="M172.500,197.500 L173.750,220 L170,245" stroke-width="2.500"/>
<!-- shirt outline -->
<path d="M258.750,205 L262.500,217.500 L275,217.500 L300,221 L335,221 C340,221 345,222.500 350,225 C355,227 360,230 365,235 C370,239 375,245 380,252.500 C384,259 387,266 390,275 L397.500,297.500 L407.500,320 L417.500,342.500 L430,367.500 L437.500,385 L415,400 L413.750,401 L420,440 L425,500" stroke-width="2.200"/>
<path d="M170,245 C160,250 150,255 145,257.500 L112.500,271 C100,277 90,284 85,290 C79,296 76,300 75,305 C72,315 71.500,322 71.250,330 L70,365 L70,402.500 C69,412 66,420 65,427.500 L67.500,436 L76,442.500 L78.500,500" stroke-width="2.200"/>
</g>
<!-- image border ants -->
<g shape-rendering="crispEdges">
<path d="M0.500,0.500 H499.500 V499.500" fill="none" stroke="url(#ants)" stroke-width="1"/>
<path d="M0.500,0.500 V499.500" fill="none" stroke="url(#ants)" stroke-width="1"/>
<path d="M0,499.500 H79" fill="none" stroke="url(#ants)" stroke-width="1"/>
<path d="M79,499.500 H425" fill="none" stroke="url(#antsy)" stroke-width="1"/>
<path d="M425,499.500 H500" fill="none" stroke="url(#ants)" stroke-width="1"/>
</g>
</svg>

<!-- RIGHT DOCK -->
<div class="a" style="left:817px;top:83px;width:1px;height:596px;background:#5a5a5a"></div>
<div class="a" style="left:820px;top:25px;width:1px;height:654px;background:#5a5a5a"></div>
<!-- top tabs -->
<div class="a" style="left:843px;top:27px;width:60px;height:19px;background:#2f2f2f"></div>
<div class="a" style="left:821px;top:46px;width:200px;height:1px;background:#5a5a5a"></div>
<div class="a" style="left:821px;top:25px;width:23px;height:22px;background:#454545;border:1px solid #5c5c5c;border-bottom:none"></div>
<svg style="left:820px;top:23px" width="201" height="25" viewBox="820 23 201 25">
<defs>
<radialGradient id="rgt"><stop offset="0" stop-color="#000"/><stop offset="0.250" stop-color="#111"/><stop offset="0.800" stop-color="#fff"/></radialGradient>
<linearGradient id="og" x1="0" x2="1"><stop offset="0" stop-color="#f0a030"/><stop offset="0.350" stop-color="#ffc860"/><stop offset="0.500" stop-color="#f0a030"/><stop offset="0.700" stop-color="#ffc050"/><stop offset="1" stop-color="#f5a838"/></linearGradient>
</defs>
<rect x="824.500" y="28.500" width="14" height="14" fill="#fff" stroke="#222" stroke-width="1"/>
<circle cx="831.500" cy="35.500" r="5.500" fill="url(#rgt)"/>
<rect x="845.500" y="28.500" width="14" height="14" fill="url(#og)" stroke="#222" stroke-width="1"/>
<rect x="867.500" y="28.500" width="14" height="14" fill="#fff" stroke="#222" stroke-width="1"/>
<text x="874.500" y="39.500" font-family="Liberation Sans" font-size="9.500" fill="#000" text-anchor="middle">Aa</text>
<circle cx="894" cy="35.500" r="6" fill="none" stroke="#cfcfcf" stroke-width="1.500"/>
<text x="894" y="39.200" font-family="Liberation Sans" font-size="10" font-weight="bold" fill="#d8d8d8" text-anchor="middle">?</text>
<rect x="1008.500" y="31.500" width="9" height="9" fill="none" stroke="#a8a8a8" stroke-width="1"/>
<path d="M1016,33v6.500l-5.500,-3.250z" fill="#b8b8b8"/>
</svg>
<!-- filter -->
<div class="a" style="left:825px;top:51px;width:193px;height:17px;background:#242424;border-radius:2px"></div>
<div class="t" style="transform:scaleX(1.0450);transform-origin:0 0;left:827.300px;top:52.500px;font-style:italic;color:#6e6e6e">filter</div>
<svg style="left:1004.500px;top:56.500px" width="10" height="7" viewBox="0 0 13 9"><path d="M1,1.500l5.500,5.500l5.500,-5.500" fill="none" stroke="#e8e8e8" stroke-width="1.800"/></svg>
<div class="t" style="transform:scaleX(0.9649);transform-origin:0 0;left:823.800px;top:70.300px;font-style:italic;color:#e6e6e6">2. Hardness 050 (51 × 51)</div>
<!-- brushes -->
<div class="a" style="left:994px;top:86px;width:11px;height:180px;background:#3c3c3c"></div>
<div class="a" style="left:1005px;top:86px;width:13px;height:180px;background:#262626"></div>
<div class="a" style="left:1006px;top:86px;width:11px;height:78px;background:#5e5e5e;border-radius:3px"></div>
<svg style="left:824px;top:86px" width="170" height="180" viewBox="824 86 170 180">
<defs>
<filter id="b05"><feGaussianBlur stdDeviation="0.500"/></filter>
<filter id="b15"><feGaussianBlur stdDeviation="1.600"/></filter>
<radialGradient id="rg1"><stop offset="0" stop-color="#000"/><stop offset="0.150" stop-color="#111"/><stop offset="0.500" stop-color="#999"/><stop offset="1" stop-color="#fff"/></radialGradient>
<radialGradient id="rg2"><stop offset="0" stop-color="#000"/><stop offset="0.250" stop-color="#080808"/><stop offset="0.600" stop-color="#888"/><stop offset="1" stop-color="#fff"/></radialGradient>
<radialGradient id="rg3"><stop offset="0" stop-color="#000"/><stop offset="0.500" stop-color="#050505"/><stop offset="0.780" stop-color="#777"/><stop offset="1" stop-color="#fff"/></radialGradient>
<linearGradient id="lgb" x1="0.300" y1="0" x2="0.600" y2="1"><stop offset="0" stop-color="#000"/><stop offset="0.450" stop-color="#111"/><stop offset="1" stop-color="#ccc"/></linearGradient>
<clipPath id="bc"><rect x="824" y="86" width="170" height="180"/></clipPath>
</defs>
<g clip-path="url(#bc)"><rect x="824" y="86" width="170" height="180" fill="#fff"/><ellipse cx="875" cy="171" rx="8" ry="7.5" fill="#000" opacity="0.75" filter="url(#b15)"/><ellipse cx="909" cy="171" rx="8.5" ry="4.5" fill="#000" opacity="0.5" filter="url(#b15)"/><ellipse cx="943" cy="171" rx="4.5" ry="8" fill="#000" opacity="0.45" filter="url(#b15)"/><ellipse cx="841" cy="206" rx="9" ry="9" fill="#000" opacity="0.75" filter="url(#b15)"/><ellipse cx="909" cy="240" rx="9" ry="9" fill="#000" opacity="0.45" filter="url(#b15)"/><ellipse cx="840" cy="239" rx="8" ry="8" fill="#000" opacity="0.25" filter="url(#b15)"/><ellipse cx="943" cy="239" rx="10" ry="10" fill="#000" opacity="0.3" filter="url(#b15)"/><rect x="908" y="101" width="2.500" height="2.500" fill="#222"/><rect x="929" y="99" width="29" height="7" fill="#000" filter="url(#b05)"/><ellipse cx="976.5" cy="102.5" rx="12.500" ry="4.500" fill="#000" filter="url(#b15)"/><rect x="827" y="136" width="28.500" height="1" fill="#000"/><circle cx="875.5" cy="137" r="13" fill="url(#rg1)"/><circle cx="909" cy="137" r="14" fill="url(#rg2)"/><circle cx="943" cy="137" r="14.500" fill="url(#rg3)"/><circle cx="977" cy="137" r="15.500" fill="#000"/><rect x="892.5" y="120.5" width="33" height="33" fill="none" stroke="#000" stroke-width="1"/><polygon points="841.0,157.3 844.2,166.9 854.3,167.0 846.2,173.0 849.2,182.6 841.0,176.8 832.8,182.6 835.8,173.0 827.7,167.0 837.8,166.9" fill="#000"/><g fill="#000" opacity="0.75"><circle cx="873.8" cy="173.1" r="1.1"/><circle cx="880.1" cy="173.2" r="0.8"/><circle cx="880.1" cy="172.7" r="0.5"/><circle cx="873.4" cy="171.6" r="0.6"/><circle cx="867.4" cy="174.5" r="0.6"/><circle cx="876.1" cy="176.7" r="1.4"/><circle cx="871.0" cy="169.1" r="1.4"/><circle cx="883.6" cy="173.3" r="0.8"/><circle cx="876.4" cy="172.6" r="0.8"/><circle cx="876.2" cy="168.6" r="1.0"/><circle cx="872.2" cy="168.0" r="1.0"/><circle cx="876.5" cy="171.6" r="0.7"/><circle cx="873.0" cy="167.1" r="0.8"/><circle cx="870.7" cy="168.7" r="0.8"/><circle cx="876.9" cy="164.9" r="0.7"/><circle cx="870.0" cy="168.7" r="1.3"/><circle cx="874.5" cy="167.7" r="1.4"/><circle cx="878.5" cy="173.9" r="1.2"/><circle cx="878.0" cy="174.9" r="0.5"/><circle cx="871.2" cy="164.9" r="1.0"/><circle cx="877.8" cy="168.5" r="1.1"/><circle cx="870.0" cy="168.0" r="0.9"/><circle cx="880.9" cy="162.7" r="0.9"/><circle cx="874.2" cy="169.8" r="1.1"/><circle cx="866.4" cy="160.7" r="1.2"/><circle cx="874.0" cy="174.9" r="1.1"/><circle cx="880.0" cy="171.6" r="0.7"/><circle cx="876.2" cy="172.0" r="1.2"/><circle cx="877.4" cy="173.2" r="0.9"/><circle cx="876.3" cy="169.8" r="0.9"/><circle cx="866.0" cy="168.4" r="1.2"/><circle cx="877.4" cy="168.5" r="0.9"/><circle cx="869.0" cy="177.6" r="1.4"/><circle cx="876.7" cy="173.1" r="0.7"/><circle cx="875.5" cy="175.7" r="1.0"/><circle cx="875.0" cy="171.4" r="0.9"/><circle cx="871.0" cy="174.9" r="1.4"/><circle cx="873.0" cy="166.4" r="1.1"/><circle cx="874.3" cy="169.8" r="1.3"/><circle cx="876.7" cy="162.8" r="1.2"/><circle cx="871.4" cy="173.6" r="0.6"/><circle cx="873.9" cy="169.9" r="0.6"/><circle cx="875.7" cy="173.4" r="0.8"/><circle cx="875.1" cy="171.0" r="0.6"/><circle cx="878.5" cy="173.3" r="0.5"/><circle cx="879.4" cy="167.0" r="0.6"/><circle cx="874.9" cy="174.8" r="0.8"/><circle cx="881.3" cy="176.5" r="1.4"/><circle cx="869.9" cy="172.0" r="0.6"/><circle cx="878.3" cy="173.2" r="0.7"/><circle cx="876.3" cy="168.9" r="0.5"/><circle cx="880.3" cy="169.5" r="0.6"/><circle cx="874.0" cy="170.7" r="1.0"/><circle cx="884.0" cy="169.9" r="1.1"/><circle cx="874.7" cy="174.9" r="0.7"/><circle cx="875.8" cy="166.0" r="1.2"/><circle cx="873.5" cy="173.5" r="1.2"/><circle cx="883.9" cy="170.2" r="1.2"/><circle cx="878.1" cy="164.9" r="0.7"/><circle cx="870.8" cy="170.6" r="0.5"/><circle cx="878.6" cy="171.6" r="0.7"/><circle cx="871.0" cy="161.4" r="0.9"/><circle cx="887.5" cy="166.3" r="1.4"/><circle cx="872.9" cy="173.2" r="0.7"/><circle cx="876.0" cy="173.6" r="1.1"/><circle cx="882.1" cy="166.4" r="0.9"/><circle cx="870.3" cy="165.0" r="0.6"/><circle cx="869.7" cy="163.4" r="1.2"/><circle cx="875.0" cy="166.3" r="0.7"/><circle cx="876.0" cy="167.4" r="1.2"/><circle cx="879.5" cy="170.3" r="0.9"/><circle cx="881.9" cy="168.8" r="0.7"/><circle cx="876.8" cy="172.7" r="1.3"/><circle cx="875.9" cy="168.8" r="1.2"/><circle cx="881.6" cy="170.3" r="0.8"/><circle cx="872.7" cy="170.3" r="0.5"/><circle cx="881.5" cy="169.9" r="1.0"/><circle cx="879.4" cy="169.2" r="1.3"/><circle cx="876.4" cy="168.5" r="0.7"/><circle cx="874.1" cy="173.9" r="1.0"/><circle cx="874.7" cy="175.3" r="0.6"/><circle cx="878.6" cy="169.0" r="0.9"/><circle cx="866.5" cy="166.6" r="0.9"/><circle cx="879.7" cy="168.6" r="1.0"/><circle cx="874.1" cy="170.9" r="0.9"/><circle cx="875.2" cy="171.3" r="1.2"/><circle cx="877.4" cy="175.1" r="1.2"/><circle cx="871.2" cy="169.7" r="1.0"/><circle cx="867.5" cy="168.6" r="0.6"/><circle cx="871.8" cy="169.9" r="0.7"/><circle cx="875.8" cy="166.2" r="1.0"/><circle cx="875.6" cy="162.0" r="0.9"/><circle cx="870.9" cy="167.8" r="1.0"/><circle cx="873.2" cy="166.8" r="1.0"/><circle cx="864.3" cy="172.3" r="1.1"/><circle cx="882.7" cy="164.2" r="0.7"/><circle cx="864.9" cy="167.4" r="1.3"/><circle cx="876.5" cy="172.6" r="0.9"/><circle cx="878.0" cy="172.3" r="0.6"/><circle cx="871.1" cy="164.7" r="1.3"/><circle cx="879.1" cy="176.4" r="1.1"/><circle cx="880.9" cy="177.6" r="1.4"/><circle cx="877.1" cy="180.9" r="0.9"/><circle cx="876.3" cy="168.9" r="0.9"/><circle cx="870.9" cy="170.6" r="0.7"/><circle cx="872.0" cy="176.9" r="0.5"/><circle cx="870.4" cy="169.5" r="0.5"/><circle cx="871.9" cy="176.0" r="1.0"/><circle cx="887.1" cy="175.7" r="1.2"/><circle cx="877.1" cy="170.7" r="0.7"/><circle cx="882.7" cy="172.7" r="0.7"/><circle cx="878.3" cy="174.1" r="1.3"/><circle cx="876.5" cy="168.1" r="0.6"/><circle cx="880.2" cy="168.4" r="1.1"/><circle cx="876.3" cy="171.8" r="1.1"/><circle cx="873.4" cy="171.7" r="1.3"/><circle cx="869.6" cy="165.5" r="0.6"/><circle cx="876.0" cy="169.8" r="1.3"/><circle cx="871.0" cy="172.1" r="1.0"/><circle cx="878.2" cy="169.6" r="0.6"/><circle cx="871.7" cy="170.5" r="0.6"/><circle cx="875.8" cy="172.1" r="0.7"/><circle cx="873.5" cy="174.2" r="1.2"/><circle cx="873.7" cy="175.7" r="0.7"/><circle cx="874.5" cy="171.6" r="0.7"/><circle cx="882.4" cy="171.6" r="1.0"/><circle cx="876.9" cy="175.3" r="1.3"/><circle cx="881.6" cy="175.7" r="0.9"/><circle cx="866.4" cy="171.2" r="0.9"/><circle cx="868.1" cy="170.7" r="1.4"/><circle cx="870.3" cy="177.5" r="1.1"/><circle cx="872.0" cy="167.9" r="0.8"/><circle cx="877.3" cy="171.7" r="0.6"/><circle cx="874.8" cy="167.9" r="0.6"/><circle cx="882.5" cy="175.0" r="1.3"/><circle cx="873.2" cy="168.1" r="0.7"/><circle cx="873.7" cy="175.4" r="0.6"/><circle cx="871.7" cy="172.1" r="1.4"/><circle cx="880.6" cy="170.1" r="0.7"/><circle cx="878.8" cy="170.2" r="0.8"/><circle cx="879.5" cy="171.0" r="0.9"/><circle cx="872.0" cy="171.0" r="1.0"/><circle cx="878.6" cy="171.1" r="0.6"/><circle cx="873.9" cy="171.7" r="0.5"/><circle cx="873.9" cy="173.8" r="1.0"/><circle cx="867.6" cy="169.8" r="1.1"/><circle cx="873.0" cy="162.8" r="0.9"/><circle cx="868.9" cy="181.5" r="0.6"/><circle cx="873.9" cy="165.2" r="0.5"/><circle cx="879.9" cy="163.6" r="1.1"/><circle cx="874.2" cy="163.6" r="0.6"/><circle cx="869.7" cy="170.3" r="1.3"/><circle cx="877.9" cy="163.8" r="1.0"/><circle cx="880.4" cy="167.1" r="1.1"/><circle cx="875.1" cy="172.0" r="0.6"/><circle cx="873.6" cy="172.5" r="1.3"/><circle cx="869.0" cy="168.9" r="1.1"/><circle cx="872.8" cy="166.7" r="0.5"/><circle cx="877.2" cy="164.5" r="1.0"/><circle cx="868.5" cy="169.7" r="0.6"/><circle cx="874.7" cy="167.9" r="0.6"/><circle cx="874.3" cy="177.6" r="0.7"/><circle cx="874.2" cy="159.9" r="0.9"/><circle cx="871.2" cy="174.1" r="1.1"/><circle cx="875.7" cy="165.4" r="1.1"/><circle cx="877.3" cy="172.1" r="0.7"/><circle cx="874.8" cy="167.5" r="1.0"/><circle cx="876.6" cy="171.1" r="0.7"/><circle cx="871.7" cy="165.5" r="1.1"/></g><g fill="#000" opacity="0.7"><circle cx="907.5" cy="174.7" r="0.7"/><circle cx="906.5" cy="171.3" r="1.0"/><circle cx="913.3" cy="179.4" r="1.1"/><circle cx="914.5" cy="171.4" r="1.0"/><circle cx="914.4" cy="170.3" r="0.6"/><circle cx="912.0" cy="178.4" r="0.5"/><circle cx="906.6" cy="170.1" r="0.8"/><circle cx="911.6" cy="170.5" r="1.0"/><circle cx="898.6" cy="170.6" r="0.9"/><circle cx="910.2" cy="177.7" r="0.7"/><circle cx="909.4" cy="171.0" r="0.7"/><circle cx="905.0" cy="171.8" r="0.5"/><circle cx="906.6" cy="173.3" r="1.0"/><circle cx="917.3" cy="171.1" r="1.0"/><circle cx="917.3" cy="176.0" r="0.9"/><circle cx="912.4" cy="169.5" r="0.7"/><circle cx="905.0" cy="169.4" r="0.7"/><circle cx="908.8" cy="172.0" r="0.5"/><circle cx="911.1" cy="168.8" r="1.1"/><circle cx="909.0" cy="173.5" r="0.8"/><circle cx="910.8" cy="173.9" r="1.1"/><circle cx="915.8" cy="167.1" r="0.8"/><circle cx="919.2" cy="167.1" r="0.8"/><circle cx="908.7" cy="170.0" r="0.9"/><circle cx="901.0" cy="172.6" r="0.9"/><circle cx="908.6" cy="172.0" r="1.0"/><circle cx="912.9" cy="173.6" r="0.6"/><circle cx="906.6" cy="176.0" r="1.1"/><circle cx="908.5" cy="175.6" r="0.6"/><circle cx="904.3" cy="169.9" r="0.5"/><circle cx="910.8" cy="172.8" r="1.0"/><circle cx="905.5" cy="171.0" r="1.0"/><circle cx="914.5" cy="170.9" r="0.5"/><circle cx="909.8" cy="172.3" r="0.6"/><circle cx="912.1" cy="172.3" r="0.6"/><circle cx="899.5" cy="168.2" r="0.9"/><circle cx="904.6" cy="172.7" r="0.8"/><circle cx="905.8" cy="173.0" r="0.4"/><circle cx="906.7" cy="179.2" r="0.5"/><circle cx="902.0" cy="170.9" r="1.0"/><circle cx="909.8" cy="173.5" r="0.6"/><circle cx="904.6" cy="173.0" r="1.1"/><circle cx="914.9" cy="165.7" r="0.4"/><circle cx="916.7" cy="172.0" r="1.0"/><circle cx="902.4" cy="171.7" r="0.4"/><circle cx="900.1" cy="175.6" r="1.0"/><circle cx="917.2" cy="164.3" r="0.6"/><circle cx="911.2" cy="172.2" r="0.8"/><circle cx="904.1" cy="164.1" r="0.9"/><circle cx="903.9" cy="166.7" r="0.7"/><circle cx="907.7" cy="170.7" r="0.9"/><circle cx="910.2" cy="178.1" r="0.9"/><circle cx="908.1" cy="172.6" r="0.6"/><circle cx="903.9" cy="167.3" r="0.5"/><circle cx="914.5" cy="172.7" r="0.8"/><circle cx="906.3" cy="172.5" r="0.8"/><circle cx="913.2" cy="171.2" r="0.7"/><circle cx="916.0" cy="169.8" r="1.0"/><circle cx="905.4" cy="171.4" r="0.6"/><circle cx="916.6" cy="169.8" r="0.6"/><circle cx="914.8" cy="171.5" r="0.9"/><circle cx="905.6" cy="172.2" r="0.9"/><circle cx="912.2" cy="170.0" r="0.4"/><circle cx="906.3" cy="173.8" r="0.9"/><circle cx="911.9" cy="176.4" r="0.9"/><circle cx="905.6" cy="170.9" r="1.1"/><circle cx="905.5" cy="176.5" r="0.6"/><circle cx="910.5" cy="176.3" r="0.6"/><circle cx="914.6" cy="169.9" r="0.5"/><circle cx="909.9" cy="174.3" r="0.9"/><circle cx="911.7" cy="170.4" r="0.7"/><circle cx="912.1" cy="179.4" r="0.5"/><circle cx="910.7" cy="171.4" r="0.7"/><circle cx="917.3" cy="167.1" r="0.9"/><circle cx="920.6" cy="170.9" r="0.6"/><circle cx="913.6" cy="177.9" r="0.9"/><circle cx="916.2" cy="171.9" r="0.7"/><circle cx="905.8" cy="173.0" r="0.5"/><circle cx="913.1" cy="171.0" r="0.6"/><circle cx="911.5" cy="170.5" r="1.1"/><circle cx="910.2" cy="173.9" r="1.0"/><circle cx="911.3" cy="168.0" r="0.4"/><circle cx="904.2" cy="171.5" r="1.0"/><circle cx="910.7" cy="173.8" r="1.0"/><circle cx="914.1" cy="171.6" r="1.0"/><circle cx="909.2" cy="170.1" r="0.4"/><circle cx="919.4" cy="173.7" r="0.6"/><circle cx="908.8" cy="164.2" r="0.6"/><circle cx="907.2" cy="178.9" r="0.8"/></g><g fill="#000" opacity="0.6"><circle cx="942.6" cy="178.9" r="0.6"/><circle cx="942.9" cy="171.4" r="0.9"/><circle cx="947.5" cy="167.4" r="1.1"/><circle cx="945.6" cy="171.6" r="0.7"/><circle cx="951.7" cy="167.7" r="0.7"/><circle cx="943.0" cy="176.3" r="0.7"/><circle cx="945.1" cy="169.6" r="1.0"/><circle cx="942.5" cy="161.7" r="0.9"/><circle cx="940.5" cy="168.2" r="0.6"/><circle cx="938.9" cy="177.7" r="0.5"/><circle cx="945.0" cy="178.9" r="0.6"/><circle cx="943.9" cy="171.5" r="0.8"/><circle cx="938.3" cy="183.5" r="1.0"/><circle cx="945.8" cy="170.7" r="0.5"/><circle cx="946.5" cy="174.3" r="0.9"/><circle cx="940.5" cy="172.2" r="0.7"/><circle cx="939.0" cy="165.9" r="0.9"/><circle cx="946.1" cy="164.9" r="0.5"/><circle cx="944.6" cy="167.5" r="0.8"/><circle cx="938.8" cy="176.9" r="0.5"/><circle cx="943.0" cy="174.8" r="0.5"/><circle cx="946.6" cy="166.6" r="0.6"/><circle cx="934.0" cy="180.5" r="0.8"/><circle cx="943.8" cy="180.0" r="0.9"/><circle cx="944.7" cy="170.9" r="0.7"/><circle cx="945.9" cy="162.3" r="1.0"/><circle cx="945.9" cy="172.0" r="0.5"/><circle cx="946.6" cy="183.5" r="0.8"/><circle cx="946.2" cy="169.0" r="1.0"/><circle cx="940.3" cy="172.2" r="0.9"/><circle cx="944.6" cy="170.2" r="0.8"/><circle cx="941.1" cy="168.6" r="0.7"/><circle cx="944.5" cy="173.6" r="0.6"/><circle cx="938.7" cy="166.8" r="0.5"/><circle cx="946.2" cy="171.3" r="0.9"/><circle cx="944.2" cy="175.0" r="0.5"/><circle cx="944.3" cy="165.0" r="0.4"/><circle cx="945.9" cy="174.0" r="0.8"/><circle cx="942.0" cy="169.3" r="0.5"/><circle cx="941.7" cy="166.2" r="0.6"/><circle cx="939.8" cy="182.6" r="0.6"/><circle cx="939.9" cy="169.1" r="0.7"/><circle cx="951.1" cy="158.3" r="0.7"/><circle cx="944.9" cy="178.6" r="0.5"/><circle cx="950.8" cy="171.4" r="0.7"/><circle cx="944.6" cy="166.4" r="1.0"/><circle cx="940.9" cy="171.7" r="0.4"/><circle cx="938.1" cy="168.7" r="1.0"/><circle cx="947.3" cy="174.7" r="0.7"/><circle cx="941.0" cy="170.9" r="0.6"/><circle cx="934.8" cy="169.5" r="0.5"/><circle cx="936.4" cy="171.5" r="1.1"/><circle cx="943.6" cy="173.5" r="1.1"/><circle cx="947.1" cy="170.1" r="0.4"/><circle cx="946.2" cy="168.8" r="1.0"/><circle cx="938.1" cy="164.6" r="0.5"/><circle cx="943.6" cy="167.5" r="0.7"/><circle cx="946.9" cy="163.3" r="0.5"/><circle cx="943.7" cy="176.0" r="0.8"/><circle cx="941.6" cy="172.7" r="0.6"/><circle cx="941.8" cy="160.5" r="0.4"/><circle cx="937.3" cy="167.8" r="0.4"/><circle cx="944.0" cy="168.9" r="0.8"/><circle cx="938.1" cy="168.8" r="0.6"/><circle cx="938.8" cy="174.2" r="0.7"/><circle cx="940.9" cy="166.4" r="0.7"/><circle cx="948.0" cy="172.0" r="0.7"/><circle cx="943.6" cy="179.5" r="0.9"/><circle cx="940.8" cy="171.8" r="0.7"/><circle cx="944.5" cy="172.6" r="0.7"/><circle cx="946.3" cy="173.9" r="0.8"/><circle cx="948.0" cy="172.8" r="0.5"/><circle cx="942.3" cy="162.4" r="0.8"/><circle cx="947.1" cy="173.0" r="0.7"/><circle cx="944.9" cy="170.2" r="1.0"/><circle cx="948.9" cy="170.8" r="1.0"/><circle cx="946.6" cy="184.3" r="0.7"/><circle cx="950.8" cy="168.0" r="0.5"/><circle cx="945.0" cy="159.8" r="0.4"/><circle cx="939.4" cy="177.8" r="0.5"/><circle cx="945.3" cy="168.6" r="1.0"/><circle cx="945.7" cy="175.6" r="1.0"/><circle cx="943.7" cy="174.8" r="0.8"/><circle cx="942.6" cy="172.2" r="0.5"/><circle cx="947.5" cy="181.0" r="0.9"/><circle cx="944.8" cy="169.1" r="0.9"/><circle cx="946.4" cy="175.1" r="0.8"/><circle cx="938.3" cy="178.8" r="0.8"/><circle cx="936.4" cy="166.0" r="0.5"/><circle cx="948.1" cy="170.7" r="0.7"/></g><ellipse cx="976" cy="170" rx="9" ry="8" fill="#000" opacity="0.45" filter="url(#b15)"/><g fill="#000" opacity="0.35"><circle cx="976.9" cy="167.3" r="0.9"/><circle cx="972.6" cy="168.4" r="0.8"/><circle cx="973.6" cy="170.8" r="0.8"/><circle cx="983.2" cy="172.0" r="0.5"/><circle cx="968.5" cy="162.0" r="0.7"/><circle cx="974.2" cy="167.3" r="0.4"/><circle cx="978.3" cy="170.4" r="0.7"/><circle cx="971.5" cy="171.8" r="0.8"/><circle cx="978.0" cy="171.9" r="0.7"/><circle cx="976.3" cy="170.0" r="0.6"/><circle cx="979.0" cy="172.1" r="0.5"/><circle cx="971.3" cy="167.6" r="0.5"/><circle cx="972.7" cy="167.1" r="0.5"/><circle cx="978.8" cy="168.9" r="0.5"/><circle cx="980.8" cy="172.9" r="0.8"/><circle cx="976.8" cy="166.4" r="0.5"/><circle cx="981.9" cy="170.4" r="0.7"/><circle cx="972.5" cy="174.2" r="0.6"/><circle cx="982.1" cy="167.7" r="0.5"/><circle cx="977.0" cy="169.4" r="0.7"/><circle cx="973.5" cy="171.5" r="0.4"/><circle cx="976.1" cy="169.4" r="0.7"/><circle cx="978.1" cy="169.3" r="0.5"/><circle cx="972.2" cy="167.3" r="0.7"/><circle cx="977.0" cy="167.9" r="0.6"/><circle cx="975.6" cy="171.1" r="0.8"/><circle cx="977.3" cy="164.4" r="0.4"/><circle cx="979.8" cy="165.0" r="0.6"/><circle cx="975.8" cy="166.0" r="0.5"/><circle cx="978.3" cy="171.6" r="0.4"/><circle cx="972.5" cy="175.2" r="0.7"/><circle cx="979.6" cy="165.3" r="0.5"/><circle cx="971.9" cy="168.7" r="0.8"/><circle cx="972.8" cy="169.6" r="0.7"/><circle cx="978.8" cy="169.4" r="0.8"/><circle cx="979.2" cy="170.3" r="0.5"/><circle cx="975.6" cy="161.3" r="0.8"/><circle cx="972.1" cy="176.6" r="0.6"/><circle cx="976.6" cy="177.9" r="0.7"/><circle cx="973.9" cy="165.0" r="0.9"/><circle cx="968.3" cy="171.3" r="0.7"/><circle cx="978.7" cy="167.0" r="0.8"/><circle cx="972.8" cy="168.7" r="0.5"/><circle cx="974.8" cy="169.0" r="0.9"/><circle cx="976.6" cy="170.7" r="0.5"/><circle cx="979.4" cy="168.6" r="0.5"/><circle cx="977.2" cy="170.2" r="0.7"/><circle cx="971.8" cy="165.8" r="0.8"/><circle cx="981.0" cy="172.0" r="0.6"/><circle cx="979.1" cy="163.9" r="0.8"/><circle cx="983.5" cy="172.9" r="0.9"/><circle cx="977.8" cy="169.4" r="0.5"/><circle cx="976.8" cy="170.6" r="0.8"/><circle cx="978.2" cy="165.2" r="0.8"/><circle cx="973.7" cy="167.8" r="0.4"/><circle cx="981.6" cy="173.5" r="0.5"/><circle cx="974.2" cy="173.5" r="0.4"/><circle cx="975.9" cy="173.0" r="0.8"/><circle cx="973.6" cy="172.4" r="0.9"/><circle cx="968.0" cy="169.8" r="0.7"/></g><g fill="#000" opacity="0.75"><circle cx="846.1" cy="207.0" r="0.9"/><circle cx="841.7" cy="201.4" r="1.1"/><circle cx="837.6" cy="205.2" r="1.3"/><circle cx="848.8" cy="211.0" r="0.7"/><circle cx="844.4" cy="206.0" r="1.2"/><circle cx="841.5" cy="205.9" r="0.9"/><circle cx="832.1" cy="206.5" r="0.7"/><circle cx="836.4" cy="206.2" r="1.2"/><circle cx="840.2" cy="218.0" r="0.8"/><circle cx="842.7" cy="213.6" r="0.9"/><circle cx="846.5" cy="210.5" r="0.6"/><circle cx="842.8" cy="198.5" r="1.2"/><circle cx="837.7" cy="202.6" r="0.9"/><circle cx="832.7" cy="212.5" r="0.6"/><circle cx="841.9" cy="205.3" r="0.7"/><circle cx="840.1" cy="216.7" r="1.0"/><circle cx="833.5" cy="213.1" r="0.7"/><circle cx="835.0" cy="207.5" r="1.2"/><circle cx="841.1" cy="198.8" r="0.8"/><circle cx="839.7" cy="208.6" r="1.3"/><circle cx="836.7" cy="199.0" r="0.7"/><circle cx="833.0" cy="209.2" r="1.0"/><circle cx="844.9" cy="210.0" r="1.3"/><circle cx="841.2" cy="209.3" r="0.8"/><circle cx="838.2" cy="196.8" r="0.6"/><circle cx="843.1" cy="209.1" r="0.8"/><circle cx="838.1" cy="205.6" r="0.8"/><circle cx="846.1" cy="218.6" r="1.2"/><circle cx="851.3" cy="213.6" r="0.6"/><circle cx="830.3" cy="215.5" r="1.2"/><circle cx="840.4" cy="200.7" r="0.7"/><circle cx="839.5" cy="204.2" r="0.7"/><circle cx="840.0" cy="206.8" r="0.9"/><circle cx="843.0" cy="198.6" r="1.0"/><circle cx="837.2" cy="201.9" r="0.6"/><circle cx="837.0" cy="202.9" r="1.2"/><circle cx="845.4" cy="203.1" r="1.0"/><circle cx="841.0" cy="200.8" r="0.7"/><circle cx="839.2" cy="195.9" r="1.2"/><circle cx="838.0" cy="196.7" r="1.1"/><circle cx="837.5" cy="201.7" r="0.8"/><circle cx="839.4" cy="204.4" r="0.9"/><circle cx="842.6" cy="198.3" r="1.1"/><circle cx="841.0" cy="211.2" r="0.9"/><circle cx="837.3" cy="202.5" r="1.1"/><circle cx="843.9" cy="204.6" r="1.1"/><circle cx="841.9" cy="201.1" r="0.9"/><circle cx="842.4" cy="205.8" r="1.0"/><circle cx="845.6" cy="213.4" r="1.3"/><circle cx="838.7" cy="205.7" r="1.0"/><circle cx="833.3" cy="204.0" r="1.0"/><circle cx="835.0" cy="198.8" r="1.0"/><circle cx="830.7" cy="212.5" r="0.7"/><circle cx="839.0" cy="201.4" r="1.2"/><circle cx="851.4" cy="216.0" r="0.8"/><circle cx="844.8" cy="207.4" r="0.9"/><circle cx="846.2" cy="206.4" r="0.9"/><circle cx="839.5" cy="201.6" r="0.7"/><circle cx="842.3" cy="214.1" r="1.3"/><circle cx="837.5" cy="205.4" r="1.2"/><circle cx="838.3" cy="208.2" r="0.6"/><circle cx="842.5" cy="197.0" r="1.1"/><circle cx="834.7" cy="207.2" r="0.7"/><circle cx="845.5" cy="204.9" r="1.1"/><circle cx="844.9" cy="197.6" r="0.9"/><circle cx="839.3" cy="212.1" r="0.6"/><circle cx="843.4" cy="202.0" r="1.3"/><circle cx="840.5" cy="210.8" r="0.7"/><circle cx="838.1" cy="207.4" r="0.5"/><circle cx="840.3" cy="202.0" r="0.7"/><circle cx="839.2" cy="211.4" r="0.9"/><circle cx="836.2" cy="200.4" r="0.8"/><circle cx="849.8" cy="201.7" r="0.6"/><circle cx="846.1" cy="196.4" r="1.2"/><circle cx="847.0" cy="213.3" r="1.1"/><circle cx="841.8" cy="206.1" r="1.4"/><circle cx="838.9" cy="202.9" r="0.6"/><circle cx="843.3" cy="208.9" r="1.2"/><circle cx="839.4" cy="208.4" r="1.3"/><circle cx="841.8" cy="203.1" r="1.3"/><circle cx="834.2" cy="200.5" r="1.1"/><circle cx="847.9" cy="200.6" r="1.3"/><circle cx="843.5" cy="213.3" r="1.0"/><circle cx="840.7" cy="200.6" r="1.3"/><circle cx="837.3" cy="204.7" r="0.7"/><circle cx="844.7" cy="210.5" r="0.6"/><circle cx="838.3" cy="206.6" r="0.9"/><circle cx="834.8" cy="206.1" r="1.3"/><circle cx="850.6" cy="206.4" r="0.9"/><circle cx="834.2" cy="203.2" r="1.3"/><circle cx="837.3" cy="209.7" r="1.4"/><circle cx="847.3" cy="209.2" r="1.1"/><circle cx="847.7" cy="207.2" r="1.1"/><circle cx="845.1" cy="204.1" r="1.4"/><circle cx="835.3" cy="205.6" r="1.3"/><circle cx="848.8" cy="207.7" r="1.1"/><circle cx="835.7" cy="214.4" r="0.8"/><circle cx="835.0" cy="207.0" r="1.2"/><circle cx="842.3" cy="211.2" r="0.9"/><circle cx="832.2" cy="202.9" r="0.8"/><circle cx="843.4" cy="201.5" r="1.0"/><circle cx="840.2" cy="211.9" r="1.4"/><circle cx="836.0" cy="198.7" r="0.8"/><circle cx="839.3" cy="209.8" r="1.0"/><circle cx="835.2" cy="199.4" r="0.5"/><circle cx="839.2" cy="195.7" r="1.0"/><circle cx="845.0" cy="207.3" r="0.5"/><circle cx="845.2" cy="216.5" r="1.0"/><circle cx="836.2" cy="198.6" r="1.3"/><circle cx="835.7" cy="201.5" r="1.1"/><circle cx="838.8" cy="199.6" r="1.1"/><circle cx="842.7" cy="213.2" r="0.9"/><circle cx="841.2" cy="203.7" r="0.7"/><circle cx="849.4" cy="208.0" r="1.3"/><circle cx="838.3" cy="202.0" r="1.2"/><circle cx="842.5" cy="199.7" r="0.7"/><circle cx="839.3" cy="211.0" r="0.8"/><circle cx="834.5" cy="209.0" r="1.3"/><circle cx="847.1" cy="208.2" r="0.5"/><circle cx="847.7" cy="212.2" r="1.0"/><circle cx="845.7" cy="203.3" r="0.5"/><circle cx="835.9" cy="210.4" r="1.3"/><circle cx="846.6" cy="205.3" r="0.9"/><circle cx="846.8" cy="210.3" r="0.7"/><circle cx="841.5" cy="206.7" r="0.5"/><circle cx="840.0" cy="203.7" r="1.4"/><circle cx="849.6" cy="211.3" r="0.6"/><circle cx="848.9" cy="206.9" r="0.7"/><circle cx="840.7" cy="202.8" r="0.5"/><circle cx="842.2" cy="198.2" r="1.3"/><circle cx="840.7" cy="203.9" r="1.1"/><circle cx="839.6" cy="200.6" r="1.3"/><circle cx="840.7" cy="218.9" r="1.1"/><circle cx="841.9" cy="206.1" r="1.1"/><circle cx="841.8" cy="204.1" r="0.8"/><circle cx="840.6" cy="203.0" r="1.3"/><circle cx="839.3" cy="206.2" r="0.8"/><circle cx="836.2" cy="203.6" r="1.1"/><circle cx="846.5" cy="213.1" r="0.8"/><circle cx="836.7" cy="200.4" r="0.9"/><circle cx="834.4" cy="211.8" r="1.4"/><circle cx="842.4" cy="199.7" r="0.8"/><circle cx="853.5" cy="211.0" r="1.1"/><circle cx="843.1" cy="202.0" r="1.0"/><circle cx="850.3" cy="204.7" r="1.0"/><circle cx="839.1" cy="210.9" r="1.3"/><circle cx="835.6" cy="211.3" r="1.0"/><circle cx="848.2" cy="200.5" r="0.8"/><circle cx="844.9" cy="206.0" r="0.9"/><circle cx="833.1" cy="201.2" r="1.3"/><circle cx="850.1" cy="208.5" r="1.2"/><circle cx="845.4" cy="201.2" r="0.7"/><circle cx="846.4" cy="198.7" r="1.1"/><circle cx="845.0" cy="203.6" r="0.6"/><circle cx="832.6" cy="203.0" r="0.7"/><circle cx="841.0" cy="194.4" r="0.7"/><circle cx="835.1" cy="201.3" r="0.9"/><circle cx="842.0" cy="209.7" r="1.2"/><circle cx="842.4" cy="200.6" r="0.6"/><circle cx="844.0" cy="197.9" r="0.7"/><circle cx="831.6" cy="200.9" r="1.3"/><circle cx="835.4" cy="205.2" r="1.0"/><circle cx="842.2" cy="209.0" r="0.7"/><circle cx="839.6" cy="201.5" r="1.0"/><circle cx="836.1" cy="209.5" r="0.6"/><circle cx="839.3" cy="207.7" r="1.1"/><circle cx="841.7" cy="203.2" r="1.0"/><circle cx="837.6" cy="211.0" r="0.5"/><circle cx="844.8" cy="201.7" r="1.0"/><circle cx="840.4" cy="214.7" r="0.9"/><circle cx="849.1" cy="203.2" r="1.2"/><circle cx="844.7" cy="205.1" r="0.5"/><circle cx="842.0" cy="209.0" r="0.6"/><circle cx="847.1" cy="208.0" r="1.3"/><circle cx="829.3" cy="209.1" r="1.3"/><circle cx="847.2" cy="208.6" r="0.9"/><circle cx="850.2" cy="214.7" r="0.7"/><circle cx="834.4" cy="203.2" r="1.4"/><circle cx="838.6" cy="201.6" r="0.9"/><circle cx="848.0" cy="217.0" r="1.4"/><circle cx="841.2" cy="207.4" r="0.7"/><circle cx="834.5" cy="214.7" r="1.3"/><circle cx="841.8" cy="204.7" r="1.2"/><circle cx="839.2" cy="199.0" r="1.4"/><circle cx="843.6" cy="207.0" r="1.2"/><circle cx="848.0" cy="203.2" r="0.8"/><circle cx="833.9" cy="201.4" r="0.6"/><circle cx="839.3" cy="209.4" r="0.6"/><circle cx="838.0" cy="206.4" r="0.7"/><circle cx="845.7" cy="211.9" r="0.5"/><circle cx="840.3" cy="202.8" r="0.5"/><circle cx="844.2" cy="204.5" r="1.3"/><circle cx="848.0" cy="198.2" r="0.6"/><circle cx="838.9" cy="206.7" r="1.3"/><circle cx="844.9" cy="200.1" r="0.9"/><circle cx="836.0" cy="213.9" r="0.9"/><circle cx="839.1" cy="204.0" r="0.7"/><circle cx="848.4" cy="208.8" r="1.0"/></g><path d="M865,191l2.500,6" stroke="#777" stroke-width="1.500"/><g fill="#000" opacity="0.8"><circle cx="918.3" cy="212.4" r="0.7"/><circle cx="908.3" cy="207.1" r="0.7"/><circle cx="915.4" cy="200.1" r="0.6"/><circle cx="905.8" cy="205.3" r="1.2"/><circle cx="920.2" cy="211.5" r="0.5"/><circle cx="919.1" cy="200.0" r="0.7"/><circle cx="906.2" cy="205.8" r="0.7"/><circle cx="914.0" cy="210.8" r="1.3"/><circle cx="922.6" cy="204.9" r="0.6"/><circle cx="909.4" cy="214.2" r="0.5"/><circle cx="911.1" cy="199.6" r="1.3"/><circle cx="921.8" cy="205.9" r="0.8"/><circle cx="912.3" cy="205.3" r="1.2"/><circle cx="907.3" cy="204.3" r="0.8"/></g><g fill="#000" opacity="0.85"><circle cx="947.4" cy="202.3" r="1.2"/><circle cx="946.0" cy="208.6" r="1.4"/><circle cx="941.8" cy="200.3" r="0.7"/><circle cx="950.3" cy="209.5" r="1.1"/><circle cx="942.3" cy="209.9" r="1.3"/><circle cx="940.4" cy="195.4" r="1.2"/><circle cx="943.8" cy="207.7" r="1.4"/><circle cx="935.2" cy="210.1" r="0.7"/><circle cx="945.4" cy="199.1" r="1.5"/><circle cx="948.1" cy="199.2" r="0.6"/><circle cx="949.4" cy="200.9" r="1.6"/><circle cx="942.5" cy="209.7" r="1.5"/><circle cx="940.0" cy="208.3" r="1.0"/><circle cx="942.4" cy="204.6" r="1.2"/><circle cx="935.6" cy="207.6" r="0.7"/><circle cx="940.8" cy="195.3" r="1.6"/><circle cx="939.0" cy="213.4" r="1.0"/><circle cx="943.0" cy="202.3" r="1.6"/><circle cx="950.4" cy="202.8" r="1.2"/><circle cx="935.1" cy="203.5" r="0.6"/><circle cx="948.1" cy="203.9" r="0.8"/><circle cx="947.4" cy="208.3" r="1.5"/><circle cx="946.4" cy="205.6" r="1.4"/><circle cx="943.5" cy="206.4" r="1.3"/><circle cx="935.9" cy="201.3" r="1.4"/><circle cx="951.2" cy="211.2" r="1.4"/><circle cx="946.7" cy="206.1" r="1.1"/><circle cx="937.2" cy="205.0" r="0.7"/><circle cx="939.6" cy="207.3" r="1.3"/><circle cx="945.7" cy="201.8" r="1.2"/></g><g fill="#000" opacity="0.9"><circle cx="976.9" cy="199.9" r="0.5"/><circle cx="983.9" cy="201.6" r="0.4"/><circle cx="981.6" cy="197.9" r="0.4"/><circle cx="986.9" cy="200.8" r="0.4"/><circle cx="977.4" cy="209.8" r="0.4"/><circle cx="987.7" cy="202.9" r="0.6"/><circle cx="981.4" cy="195.6" r="0.3"/><circle cx="965.3" cy="202.9" r="0.6"/><circle cx="977.0" cy="210.5" r="0.5"/><circle cx="971.2" cy="209.5" r="0.3"/><circle cx="969.2" cy="206.9" r="0.3"/><circle cx="984.6" cy="211.6" r="0.5"/><circle cx="985.8" cy="200.9" r="0.5"/><circle cx="985.4" cy="197.8" r="0.3"/><circle cx="973.1" cy="200.0" r="0.5"/><circle cx="975.7" cy="211.3" r="0.6"/><circle cx="972.7" cy="200.5" r="0.5"/><circle cx="966.3" cy="207.9" r="0.4"/><circle cx="973.7" cy="211.6" r="0.3"/><circle cx="967.3" cy="198.5" r="0.5"/><circle cx="976.1" cy="210.8" r="0.5"/><circle cx="979.5" cy="206.8" r="0.3"/><circle cx="974.9" cy="210.1" r="0.4"/><circle cx="977.1" cy="207.0" r="0.5"/><circle cx="982.0" cy="197.4" r="0.5"/><circle cx="973.8" cy="200.4" r="0.5"/><circle cx="968.4" cy="205.8" r="0.5"/><circle cx="970.4" cy="205.1" r="0.4"/><circle cx="978.5" cy="211.0" r="0.4"/><circle cx="975.9" cy="203.4" r="0.4"/></g><g fill="#000" opacity="0.55"><circle cx="843.5" cy="234.9" r="0.7"/><circle cx="834.1" cy="239.3" r="1.0"/><circle cx="837.3" cy="248.3" r="0.5"/><circle cx="849.4" cy="243.2" r="0.7"/><circle cx="846.3" cy="241.6" r="0.7"/><circle cx="839.7" cy="235.4" r="0.5"/><circle cx="849.1" cy="236.6" r="0.5"/><circle cx="836.6" cy="244.6" r="0.8"/><circle cx="832.4" cy="232.2" r="0.9"/><circle cx="830.6" cy="237.9" r="0.8"/><circle cx="840.5" cy="231.4" r="0.9"/><circle cx="837.3" cy="228.8" r="0.5"/><circle cx="840.5" cy="238.5" r="0.9"/><circle cx="833.3" cy="235.0" r="1.0"/><circle cx="833.6" cy="235.9" r="0.9"/><circle cx="846.0" cy="232.9" r="0.6"/><circle cx="832.9" cy="241.2" r="0.8"/><circle cx="838.2" cy="245.6" r="0.7"/><circle cx="835.3" cy="243.1" r="0.9"/><circle cx="844.6" cy="232.7" r="0.7"/><circle cx="842.4" cy="244.6" r="0.5"/><circle cx="832.5" cy="235.2" r="0.5"/><circle cx="845.5" cy="236.0" r="0.9"/><circle cx="845.7" cy="229.8" r="0.5"/><circle cx="830.6" cy="243.7" r="0.4"/><circle cx="847.9" cy="241.4" r="0.7"/><circle cx="848.5" cy="234.4" r="0.7"/><circle cx="847.9" cy="238.9" r="0.7"/><circle cx="837.3" cy="232.7" r="0.6"/><circle cx="834.6" cy="235.3" r="1.0"/><circle cx="836.4" cy="231.9" r="0.5"/><circle cx="835.1" cy="243.9" r="0.7"/><circle cx="830.8" cy="234.4" r="1.0"/><circle cx="832.7" cy="239.6" r="0.8"/><circle cx="846.4" cy="238.8" r="0.7"/><circle cx="841.8" cy="234.8" r="0.6"/><circle cx="849.9" cy="237.6" r="0.7"/><circle cx="848.0" cy="245.7" r="0.8"/><circle cx="844.7" cy="229.1" r="0.9"/><circle cx="836.2" cy="241.1" r="0.6"/><circle cx="832.2" cy="238.4" r="0.5"/><circle cx="843.6" cy="247.0" r="0.8"/><circle cx="833.4" cy="247.7" r="0.8"/><circle cx="846.8" cy="240.9" r="0.9"/><circle cx="836.8" cy="247.6" r="0.4"/><circle cx="836.6" cy="248.5" r="0.8"/><circle cx="837.6" cy="234.8" r="0.7"/><circle cx="834.6" cy="237.1" r="0.8"/><circle cx="829.2" cy="236.8" r="0.7"/><circle cx="836.7" cy="241.0" r="0.5"/><circle cx="840.2" cy="235.4" r="0.5"/><circle cx="843.8" cy="246.0" r="0.9"/><circle cx="832.5" cy="232.6" r="0.4"/><circle cx="849.6" cy="239.8" r="0.6"/><circle cx="838.6" cy="232.6" r="0.5"/><circle cx="839.6" cy="242.5" r="0.9"/><circle cx="834.4" cy="235.8" r="0.7"/><circle cx="838.1" cy="240.7" r="0.9"/><circle cx="830.6" cy="233.7" r="0.7"/><circle cx="836.0" cy="235.2" r="0.4"/><circle cx="849.2" cy="234.7" r="0.6"/><circle cx="848.0" cy="233.1" r="0.6"/><circle cx="831.4" cy="232.5" r="0.7"/><circle cx="845.2" cy="237.3" r="0.6"/><circle cx="839.0" cy="233.9" r="0.6"/><circle cx="845.4" cy="233.6" r="0.9"/><circle cx="840.2" cy="243.6" r="0.6"/><circle cx="844.2" cy="249.0" r="0.6"/><circle cx="836.5" cy="237.6" r="0.7"/><circle cx="834.7" cy="243.6" r="0.4"/><circle cx="847.1" cy="246.0" r="0.6"/><circle cx="840.2" cy="243.8" r="0.6"/><circle cx="840.2" cy="241.0" r="0.8"/><circle cx="837.6" cy="242.6" r="0.8"/><circle cx="844.8" cy="242.1" r="0.9"/><circle cx="845.1" cy="244.3" r="0.9"/><circle cx="841.5" cy="234.9" r="0.6"/><circle cx="838.8" cy="232.3" r="1.0"/><circle cx="842.8" cy="249.4" r="0.7"/><circle cx="841.1" cy="246.3" r="0.5"/><circle cx="838.5" cy="233.6" r="0.9"/><circle cx="834.3" cy="235.5" r="0.5"/><circle cx="836.1" cy="235.8" r="0.9"/><circle cx="845.6" cy="244.5" r="0.7"/><circle cx="838.8" cy="248.6" r="0.6"/><circle cx="835.5" cy="232.1" r="0.6"/><circle cx="837.5" cy="241.1" r="0.5"/><circle cx="843.7" cy="234.0" r="0.8"/><circle cx="846.4" cy="244.2" r="0.6"/><circle cx="834.0" cy="239.0" r="0.4"/><circle cx="838.0" cy="243.9" r="0.5"/><circle cx="838.8" cy="233.3" r="0.6"/><circle cx="848.1" cy="233.8" r="0.9"/><circle cx="842.6" cy="235.9" r="0.6"/><circle cx="848.9" cy="240.7" r="0.8"/><circle cx="835.8" cy="244.7" r="0.8"/><circle cx="838.3" cy="233.8" r="0.9"/><circle cx="834.8" cy="246.0" r="0.5"/><circle cx="847.9" cy="246.0" r="0.8"/><circle cx="839.5" cy="236.8" r="0.4"/><circle cx="842.6" cy="243.2" r="0.6"/><circle cx="838.4" cy="240.5" r="0.6"/><circle cx="837.0" cy="235.4" r="0.9"/><circle cx="831.6" cy="235.0" r="0.6"/><circle cx="831.7" cy="242.6" r="0.6"/><circle cx="850.0" cy="239.1" r="0.9"/><circle cx="839.5" cy="241.2" r="0.9"/><circle cx="838.1" cy="237.5" r="0.5"/><circle cx="847.5" cy="245.3" r="0.5"/><circle cx="848.2" cy="234.1" r="0.5"/><circle cx="837.6" cy="232.5" r="0.8"/><circle cx="842.8" cy="233.9" r="0.5"/><circle cx="846.8" cy="236.6" r="1.0"/><circle cx="836.6" cy="230.2" r="0.9"/><circle cx="834.9" cy="233.7" r="0.4"/><circle cx="837.7" cy="232.2" r="0.7"/><circle cx="843.5" cy="237.3" r="0.9"/><circle cx="848.9" cy="241.5" r="0.9"/><circle cx="839.4" cy="247.1" r="1.0"/><circle cx="834.7" cy="232.8" r="0.5"/><circle cx="846.1" cy="241.4" r="0.6"/><circle cx="841.8" cy="244.8" r="0.5"/><circle cx="837.6" cy="230.3" r="0.5"/><circle cx="840.4" cy="246.9" r="0.7"/><circle cx="846.0" cy="236.4" r="0.6"/><circle cx="843.1" cy="236.3" r="0.7"/><circle cx="835.0" cy="247.6" r="0.7"/><circle cx="840.3" cy="234.5" r="0.8"/><circle cx="833.9" cy="234.7" r="0.9"/><circle cx="841.8" cy="235.8" r="0.6"/><circle cx="836.8" cy="242.8" r="0.4"/><circle cx="839.1" cy="243.8" r="0.8"/><circle cx="836.5" cy="240.2" r="0.6"/><circle cx="833.5" cy="240.3" r="0.5"/><circle cx="841.0" cy="239.5" r="1.0"/><circle cx="840.0" cy="235.8" r="0.8"/><circle cx="848.2" cy="238.0" r="0.5"/><circle cx="832.8" cy="239.5" r="0.5"/><circle cx="839.0" cy="238.7" r="1.0"/><circle cx="834.6" cy="232.1" r="1.0"/><circle cx="836.8" cy="234.5" r="0.5"/><circle cx="841.2" cy="240.4" r="0.9"/><circle cx="843.2" cy="233.9" r="0.5"/><circle cx="833.5" cy="231.3" r="1.0"/><circle cx="844.8" cy="247.5" r="0.9"/><circle cx="839.7" cy="232.7" r="0.5"/><circle cx="842.8" cy="233.5" r="0.6"/><circle cx="833.7" cy="236.9" r="0.9"/><circle cx="840.1" cy="241.2" r="0.7"/><circle cx="833.1" cy="231.8" r="0.8"/></g><circle cx="840" cy="239" r="9" fill="none" stroke="#000" stroke-width="1" opacity="0.3"/><g fill="none" stroke="#000" stroke-width="0.9"><circle cx="871.7" cy="229.3" r="1.4"/><circle cx="875.0" cy="229.2" r="1.4"/><circle cx="879.5" cy="228.8" r="1.3"/><circle cx="865.4" cy="232.7" r="1.6"/><circle cx="870.1" cy="233.5" r="2.1"/><circle cx="873.9" cy="232.5" r="1.5"/><circle cx="877.5" cy="232.2" r="2.0"/><circle cx="881.9" cy="233.3" r="1.6"/><circle cx="867.9" cy="236.4" r="2.2"/><circle cx="871.4" cy="235.9" r="1.9"/><circle cx="876.1" cy="236.1" r="1.4"/><circle cx="879.7" cy="237.1" r="2.0"/><circle cx="883.6" cy="236.1" r="1.4"/><circle cx="865.1" cy="239.7" r="2.0"/><circle cx="868.9" cy="240.3" r="1.4"/><circle cx="873.5" cy="239.7" r="1.5"/><circle cx="878.5" cy="240.5" r="1.6"/><circle cx="882.5" cy="239.7" r="1.7"/><circle cx="886.7" cy="240.3" r="1.4"/><circle cx="867.0" cy="244.2" r="1.6"/><circle cx="871.2" cy="243.2" r="1.4"/><circle cx="875.8" cy="243.4" r="1.8"/><circle cx="879.7" cy="243.7" r="2.2"/><circle cx="884.1" cy="243.9" r="2.1"/><circle cx="869.7" cy="248.0" r="1.5"/><circle cx="874.2" cy="248.0" r="1.8"/><circle cx="877.7" cy="246.9" r="1.3"/><circle cx="882.6" cy="247.1" r="1.9"/><circle cx="875" cy="239.5" r="12.8" stroke-width="1.1"/></g><g fill="#000" opacity="0.7"><circle cx="906.9" cy="233.1" r="0.9"/><circle cx="900.9" cy="232.9" r="0.7"/><circle cx="918.7" cy="234.9" r="0.5"/><circle cx="908.8" cy="233.6" r="0.9"/><circle cx="904.4" cy="230.9" r="0.5"/><circle cx="901.8" cy="246.8" r="1.0"/><circle cx="908.6" cy="237.7" r="0.8"/><circle cx="916.2" cy="244.8" r="0.9"/><circle cx="917.8" cy="246.9" r="0.8"/><circle cx="908.8" cy="244.8" r="0.7"/><circle cx="913.8" cy="232.9" r="0.5"/><circle cx="913.0" cy="240.5" r="0.9"/><circle cx="912.5" cy="247.5" r="0.6"/><circle cx="906.2" cy="233.7" r="0.5"/><circle cx="915.2" cy="234.3" r="0.8"/><circle cx="913.2" cy="230.0" r="0.4"/><circle cx="906.4" cy="243.6" r="0.7"/><circle cx="916.5" cy="233.0" r="0.4"/><circle cx="913.5" cy="249.1" r="0.8"/><circle cx="902.5" cy="244.7" r="0.5"/><circle cx="913.2" cy="234.3" r="0.9"/><circle cx="906.5" cy="238.1" r="0.6"/><circle cx="911.4" cy="250.2" r="0.8"/><circle cx="913.8" cy="241.2" r="0.6"/><circle cx="900.1" cy="241.7" r="0.6"/><circle cx="908.4" cy="240.7" r="0.7"/><circle cx="908.1" cy="241.4" r="0.7"/><circle cx="911.5" cy="239.8" r="0.5"/><circle cx="906.0" cy="234.9" r="0.6"/><circle cx="902.9" cy="240.0" r="0.7"/><circle cx="897.4" cy="238.1" r="1.0"/><circle cx="917.8" cy="241.8" r="0.9"/><circle cx="916.3" cy="233.0" r="0.8"/><circle cx="904.2" cy="235.0" r="0.6"/><circle cx="912.1" cy="230.1" r="1.0"/><circle cx="906.2" cy="234.5" r="0.9"/><circle cx="908.4" cy="232.2" r="0.8"/><circle cx="903.7" cy="246.6" r="0.6"/><circle cx="915.5" cy="242.4" r="0.6"/><circle cx="917.3" cy="239.4" r="0.6"/><circle cx="909.2" cy="245.3" r="0.6"/><circle cx="909.7" cy="240.7" r="0.9"/><circle cx="901.3" cy="242.1" r="0.7"/><circle cx="907.4" cy="244.3" r="0.4"/><circle cx="906.9" cy="245.8" r="0.8"/><circle cx="898.0" cy="236.6" r="0.6"/><circle cx="917.1" cy="236.0" r="0.4"/><circle cx="913.0" cy="247.6" r="1.0"/><circle cx="902.4" cy="247.6" r="0.7"/><circle cx="911.1" cy="237.9" r="0.7"/><circle cx="914.1" cy="236.6" r="0.6"/><circle cx="913.8" cy="240.6" r="0.6"/><circle cx="907.4" cy="235.1" r="0.6"/><circle cx="911.9" cy="248.1" r="0.9"/><circle cx="905.8" cy="236.1" r="0.8"/><circle cx="918.1" cy="238.0" r="0.4"/><circle cx="913.1" cy="230.4" r="0.6"/><circle cx="912.4" cy="243.6" r="0.7"/><circle cx="915.8" cy="233.8" r="1.0"/><circle cx="910.6" cy="246.1" r="0.8"/><circle cx="904.5" cy="234.4" r="0.8"/><circle cx="907.5" cy="242.2" r="0.6"/><circle cx="918.1" cy="242.5" r="0.6"/><circle cx="899.7" cy="240.3" r="0.6"/><circle cx="907.6" cy="240.3" r="1.0"/><circle cx="898.0" cy="235.7" r="0.4"/><circle cx="901.3" cy="233.9" r="0.6"/><circle cx="912.9" cy="242.4" r="0.5"/><circle cx="909.4" cy="236.7" r="0.9"/><circle cx="901.2" cy="243.7" r="0.8"/><circle cx="899.8" cy="237.0" r="0.8"/><circle cx="904.0" cy="248.3" r="0.6"/><circle cx="906.5" cy="230.7" r="0.9"/><circle cx="905.2" cy="249.0" r="1.0"/><circle cx="902.9" cy="241.7" r="0.7"/><circle cx="913.1" cy="238.6" r="0.4"/><circle cx="899.4" cy="241.4" r="0.9"/><circle cx="901.2" cy="248.3" r="0.5"/><circle cx="909.1" cy="236.7" r="0.4"/><circle cx="911.0" cy="242.0" r="0.7"/><circle cx="904.2" cy="238.4" r="1.0"/><circle cx="905.9" cy="243.2" r="0.5"/><circle cx="908.1" cy="229.5" r="0.5"/><circle cx="919.4" cy="241.8" r="0.5"/><circle cx="917.4" cy="239.1" r="0.8"/><circle cx="903.0" cy="248.2" r="0.7"/><circle cx="903.9" cy="249.4" r="0.5"/><circle cx="908.7" cy="237.2" r="0.8"/><circle cx="899.9" cy="245.9" r="0.4"/><circle cx="901.9" cy="237.2" r="1.0"/><circle cx="917.9" cy="237.0" r="0.5"/><circle cx="908.9" cy="245.6" r="0.7"/><circle cx="909.6" cy="244.9" r="0.9"/><circle cx="904.9" cy="235.3" r="1.0"/><circle cx="910.9" cy="248.1" r="0.5"/><circle cx="916.3" cy="232.2" r="0.6"/><circle cx="909.1" cy="230.0" r="0.6"/><circle cx="904.9" cy="246.7" r="0.9"/><circle cx="914.2" cy="247.7" r="0.8"/><circle cx="900.3" cy="242.4" r="0.9"/><circle cx="911.8" cy="250.0" r="0.6"/><circle cx="911.1" cy="230.0" r="0.5"/><circle cx="916.9" cy="231.7" r="0.6"/><circle cx="913.0" cy="240.6" r="1.0"/><circle cx="920.4" cy="240.6" r="0.5"/><circle cx="908.7" cy="236.6" r="0.5"/><circle cx="907.5" cy="237.0" r="0.6"/><circle cx="917.9" cy="235.4" r="0.9"/><circle cx="911.2" cy="239.7" r="0.5"/><circle cx="911.6" cy="231.2" r="0.4"/><circle cx="903.2" cy="239.8" r="0.7"/><circle cx="910.3" cy="241.0" r="1.0"/><circle cx="904.4" cy="249.4" r="0.5"/><circle cx="904.6" cy="240.3" r="0.7"/><circle cx="913.3" cy="248.2" r="0.5"/><circle cx="908.4" cy="232.2" r="0.5"/><circle cx="903.9" cy="246.2" r="1.0"/><circle cx="905.7" cy="244.1" r="1.0"/><circle cx="916.6" cy="233.7" r="0.6"/><circle cx="911.7" cy="245.1" r="0.4"/><circle cx="917.2" cy="242.1" r="0.6"/><circle cx="902.2" cy="237.7" r="0.4"/><circle cx="905.3" cy="231.8" r="0.7"/><circle cx="899.5" cy="237.2" r="1.0"/><circle cx="916.1" cy="233.4" r="0.6"/><circle cx="905.8" cy="246.5" r="1.0"/><circle cx="903.3" cy="244.4" r="0.6"/><circle cx="916.5" cy="248.6" r="0.4"/><circle cx="900.0" cy="233.4" r="0.6"/><circle cx="903.3" cy="235.7" r="0.5"/><circle cx="910.3" cy="243.6" r="0.9"/><circle cx="911.4" cy="229.8" r="0.4"/><circle cx="906.7" cy="234.1" r="0.8"/><circle cx="902.6" cy="238.1" r="1.0"/><circle cx="919.4" cy="240.1" r="0.9"/><circle cx="899.8" cy="239.5" r="1.0"/><circle cx="909.9" cy="248.7" r="0.8"/><circle cx="901.7" cy="246.4" r="0.6"/><circle cx="899.7" cy="238.6" r="0.8"/><circle cx="904.8" cy="247.8" r="0.7"/><circle cx="910.6" cy="248.5" r="0.6"/><circle cx="915.9" cy="235.9" r="0.8"/><circle cx="900.8" cy="239.0" r="0.5"/><circle cx="916.2" cy="248.2" r="0.7"/><circle cx="900.4" cy="238.8" r="0.9"/><circle cx="909.4" cy="244.6" r="0.9"/><circle cx="899.7" cy="242.2" r="0.9"/><circle cx="917.8" cy="233.7" r="0.4"/><circle cx="901.0" cy="246.8" r="0.9"/><circle cx="912.4" cy="243.0" r="0.6"/><circle cx="914.7" cy="244.0" r="0.9"/><circle cx="901.0" cy="239.0" r="0.5"/><circle cx="899.5" cy="246.7" r="0.8"/><circle cx="901.1" cy="242.4" r="0.9"/><circle cx="909.3" cy="235.7" r="0.8"/><circle cx="903.2" cy="245.9" r="0.5"/><circle cx="904.2" cy="244.7" r="0.6"/><circle cx="914.3" cy="240.5" r="0.7"/><circle cx="913.7" cy="241.6" r="0.8"/><circle cx="907.9" cy="246.2" r="0.5"/><circle cx="910.8" cy="237.1" r="0.8"/><circle cx="912.4" cy="236.2" r="0.7"/><circle cx="911.5" cy="231.7" r="0.6"/><circle cx="916.7" cy="242.0" r="0.6"/><circle cx="907.5" cy="234.2" r="0.6"/><circle cx="902.5" cy="232.1" r="0.6"/><circle cx="902.1" cy="245.5" r="1.0"/><circle cx="913.2" cy="250.1" r="0.8"/><circle cx="902.2" cy="246.5" r="0.6"/><circle cx="918.4" cy="244.1" r="0.6"/><circle cx="900.7" cy="238.7" r="0.9"/><circle cx="909.1" cy="238.2" r="0.8"/><circle cx="901.1" cy="241.7" r="0.9"/><circle cx="901.9" cy="243.9" r="0.9"/><circle cx="901.2" cy="242.8" r="0.7"/><circle cx="913.4" cy="232.0" r="0.8"/><circle cx="907.0" cy="241.3" r="0.8"/><circle cx="899.1" cy="236.8" r="0.9"/><circle cx="913.2" cy="243.5" r="0.4"/><circle cx="910.6" cy="236.8" r="0.5"/><circle cx="909.2" cy="231.7" r="0.4"/><circle cx="904.7" cy="231.6" r="0.7"/><circle cx="918.4" cy="243.1" r="0.7"/><circle cx="898.6" cy="234.5" r="0.9"/><circle cx="912.2" cy="237.0" r="0.6"/><circle cx="908.1" cy="239.9" r="1.0"/><circle cx="908.1" cy="245.6" r="0.6"/><circle cx="908.6" cy="250.2" r="0.7"/><circle cx="901.2" cy="239.5" r="0.4"/><circle cx="905.2" cy="249.6" r="0.9"/></g><g fill="#000" opacity="0.8"><circle cx="946.9" cy="234.0" r="0.5"/><circle cx="951.7" cy="241.9" r="0.7"/><circle cx="934.5" cy="240.9" r="0.8"/><circle cx="935.6" cy="247.4" r="0.5"/><circle cx="951.2" cy="234.5" r="0.4"/><circle cx="939.4" cy="247.4" r="0.7"/><circle cx="936.5" cy="236.2" r="0.6"/><circle cx="944.9" cy="232.5" r="0.9"/><circle cx="946.1" cy="229.9" r="0.7"/><circle cx="950.6" cy="235.7" r="1.0"/><circle cx="950.7" cy="241.9" r="0.8"/><circle cx="954.1" cy="242.5" r="0.5"/><circle cx="938.6" cy="236.0" r="1.0"/><circle cx="932.6" cy="234.8" r="0.7"/><circle cx="938.3" cy="229.9" r="0.6"/><circle cx="945.8" cy="250.1" r="0.5"/><circle cx="947.9" cy="236.2" r="0.5"/><circle cx="952.1" cy="245.2" r="1.1"/><circle cx="934.3" cy="244.2" r="0.6"/><circle cx="951.6" cy="233.2" r="0.5"/><circle cx="952.8" cy="242.6" r="0.4"/><circle cx="946.5" cy="233.2" r="0.6"/><circle cx="936.9" cy="235.5" r="0.8"/><circle cx="949.8" cy="248.8" r="0.6"/><circle cx="945.6" cy="234.9" r="1.0"/><circle cx="950.8" cy="238.0" r="0.4"/><circle cx="935.7" cy="245.9" r="0.6"/><circle cx="939.3" cy="237.9" r="0.7"/><circle cx="941.9" cy="230.9" r="0.9"/><circle cx="951.6" cy="246.5" r="0.5"/><circle cx="954.1" cy="233.2" r="1.1"/><circle cx="936.4" cy="237.9" r="0.6"/><circle cx="943.0" cy="230.2" r="1.1"/><circle cx="950.3" cy="243.8" r="1.0"/><circle cx="935.5" cy="233.7" r="0.5"/><circle cx="947.2" cy="244.0" r="1.0"/><circle cx="946.4" cy="234.1" r="1.0"/><circle cx="952.5" cy="241.0" r="1.1"/><circle cx="936.2" cy="249.1" r="0.9"/><circle cx="949.9" cy="241.2" r="0.7"/><circle cx="943.2" cy="249.8" r="0.5"/><circle cx="944.6" cy="232.4" r="0.4"/><circle cx="939.4" cy="237.6" r="0.8"/><circle cx="945.3" cy="229.6" r="0.7"/><circle cx="951.8" cy="240.9" r="0.5"/><circle cx="940.3" cy="235.4" r="0.8"/><circle cx="938.4" cy="245.1" r="0.9"/><circle cx="945.7" cy="243.4" r="1.1"/><circle cx="937.4" cy="249.0" r="1.0"/><circle cx="938.2" cy="239.6" r="0.5"/><circle cx="946.1" cy="236.1" r="0.7"/><circle cx="938.8" cy="238.0" r="0.7"/><circle cx="947.7" cy="246.8" r="0.8"/><circle cx="939.3" cy="243.1" r="0.7"/><circle cx="944.3" cy="243.3" r="0.6"/><circle cx="949.1" cy="232.6" r="1.0"/><circle cx="955.1" cy="240.2" r="0.7"/><circle cx="945.4" cy="229.9" r="0.9"/><circle cx="944.4" cy="249.7" r="0.5"/><circle cx="942.8" cy="241.2" r="0.7"/><circle cx="936.3" cy="238.2" r="1.0"/><circle cx="951.2" cy="243.8" r="0.6"/><circle cx="933.9" cy="232.8" r="0.9"/><circle cx="948.7" cy="241.4" r="0.8"/><circle cx="945.5" cy="238.7" r="0.8"/><circle cx="939.0" cy="228.5" r="0.6"/><circle cx="946.2" cy="231.1" r="1.0"/><circle cx="955.1" cy="239.8" r="0.7"/><circle cx="939.9" cy="241.0" r="0.6"/><circle cx="942.0" cy="228.8" r="0.5"/><circle cx="940.4" cy="242.9" r="0.5"/><circle cx="944.4" cy="246.1" r="1.1"/><circle cx="954.1" cy="238.8" r="0.7"/><circle cx="932.0" cy="239.2" r="1.0"/><circle cx="943.1" cy="229.0" r="0.5"/><circle cx="934.9" cy="230.9" r="1.0"/><circle cx="951.9" cy="244.8" r="0.6"/><circle cx="949.4" cy="249.5" r="0.9"/><circle cx="942.9" cy="234.4" r="1.0"/><circle cx="954.0" cy="234.4" r="0.9"/><circle cx="948.5" cy="229.3" r="0.8"/><circle cx="932.6" cy="243.5" r="0.9"/><circle cx="947.7" cy="234.0" r="1.1"/><circle cx="931.1" cy="236.6" r="0.5"/><circle cx="953.9" cy="236.8" r="0.6"/><circle cx="946.2" cy="233.9" r="0.5"/><circle cx="937.1" cy="240.6" r="0.7"/><circle cx="951.7" cy="233.4" r="0.9"/><circle cx="934.4" cy="245.9" r="1.0"/><circle cx="938.0" cy="227.9" r="1.0"/><circle cx="939.9" cy="241.0" r="0.9"/><circle cx="946.8" cy="232.8" r="0.8"/><circle cx="948.7" cy="229.5" r="0.4"/><circle cx="941.4" cy="239.1" r="0.5"/><circle cx="946.1" cy="231.5" r="0.8"/><circle cx="936.0" cy="240.9" r="0.5"/><circle cx="936.0" cy="248.1" r="0.8"/><circle cx="942.0" cy="242.6" r="0.6"/><circle cx="940.5" cy="231.1" r="0.9"/><circle cx="944.5" cy="234.9" r="0.9"/><circle cx="954.0" cy="241.9" r="0.5"/><circle cx="941.4" cy="251.1" r="0.7"/><circle cx="944.9" cy="250.6" r="0.8"/><circle cx="949.2" cy="234.1" r="0.7"/><circle cx="951.6" cy="236.6" r="1.1"/><circle cx="947.2" cy="249.6" r="0.5"/><circle cx="942.8" cy="239.0" r="0.5"/><circle cx="950.9" cy="236.1" r="1.0"/><circle cx="943.0" cy="246.4" r="0.5"/><circle cx="932.0" cy="235.2" r="0.8"/><circle cx="934.4" cy="247.4" r="1.0"/><circle cx="941.3" cy="236.0" r="0.8"/><circle cx="931.5" cy="243.2" r="0.7"/><circle cx="937.7" cy="230.6" r="0.7"/><circle cx="932.8" cy="237.6" r="1.0"/><circle cx="935.5" cy="239.1" r="1.1"/><circle cx="953.7" cy="243.0" r="0.9"/><circle cx="935.2" cy="236.0" r="0.9"/><circle cx="951.3" cy="232.3" r="0.9"/><circle cx="950.0" cy="240.6" r="0.5"/><circle cx="954.3" cy="235.6" r="0.5"/><circle cx="934.9" cy="234.0" r="0.4"/><circle cx="934.6" cy="245.8" r="0.8"/><circle cx="940.9" cy="249.7" r="0.6"/><circle cx="935.2" cy="236.8" r="1.1"/><circle cx="936.3" cy="230.0" r="0.9"/><circle cx="934.0" cy="247.4" r="0.9"/><circle cx="940.6" cy="232.9" r="0.5"/><circle cx="932.9" cy="233.8" r="1.0"/><circle cx="940.3" cy="242.8" r="0.8"/><circle cx="946.6" cy="235.5" r="0.9"/><circle cx="946.3" cy="245.1" r="0.4"/><circle cx="940.7" cy="246.4" r="1.1"/><circle cx="948.3" cy="237.7" r="0.6"/><circle cx="948.2" cy="237.1" r="0.6"/><circle cx="939.2" cy="240.6" r="0.6"/><circle cx="936.9" cy="243.8" r="1.1"/><circle cx="942.4" cy="244.6" r="1.0"/><circle cx="932.1" cy="242.5" r="0.8"/><circle cx="944.3" cy="232.1" r="0.5"/><circle cx="943.4" cy="230.4" r="0.8"/><circle cx="937.8" cy="229.5" r="0.6"/><circle cx="935.2" cy="248.1" r="0.8"/><circle cx="940.6" cy="248.6" r="0.6"/><circle cx="943.3" cy="236.5" r="1.0"/><circle cx="936.2" cy="236.0" r="1.1"/><circle cx="942.4" cy="245.1" r="0.4"/><circle cx="932.6" cy="235.7" r="0.9"/><circle cx="933.4" cy="244.9" r="0.5"/><circle cx="939.5" cy="248.4" r="1.1"/><circle cx="936.1" cy="231.2" r="0.9"/><circle cx="933.4" cy="246.5" r="0.9"/><circle cx="938.7" cy="245.6" r="1.0"/><circle cx="939.8" cy="243.4" r="1.0"/><circle cx="934.2" cy="237.2" r="0.9"/><circle cx="946.7" cy="236.4" r="0.6"/><circle cx="950.4" cy="242.2" r="0.8"/><circle cx="949.1" cy="230.8" r="0.8"/><circle cx="935.2" cy="244.4" r="0.6"/><circle cx="949.2" cy="229.8" r="1.0"/><circle cx="949.0" cy="247.3" r="0.9"/><circle cx="931.2" cy="239.0" r="1.0"/><circle cx="942.5" cy="227.7" r="0.9"/><circle cx="946.3" cy="235.9" r="0.9"/><circle cx="940.2" cy="229.6" r="0.6"/><circle cx="951.9" cy="243.0" r="1.0"/><circle cx="942.2" cy="244.7" r="0.6"/><circle cx="951.5" cy="244.7" r="1.1"/><circle cx="945.4" cy="231.9" r="0.9"/><circle cx="953.3" cy="244.0" r="0.6"/><circle cx="952.9" cy="239.2" r="0.5"/><circle cx="942.5" cy="242.0" r="0.7"/><circle cx="932.4" cy="235.2" r="0.4"/><circle cx="944.9" cy="235.3" r="0.6"/><circle cx="938.0" cy="233.7" r="0.6"/><circle cx="937.7" cy="236.6" r="1.0"/><circle cx="945.9" cy="250.1" r="1.0"/><circle cx="940.9" cy="238.5" r="0.9"/><circle cx="951.7" cy="240.6" r="0.7"/><circle cx="952.2" cy="242.8" r="0.9"/><circle cx="936.2" cy="235.0" r="0.8"/><circle cx="938.0" cy="235.9" r="1.0"/><circle cx="954.2" cy="238.7" r="1.1"/><circle cx="937.1" cy="249.9" r="0.4"/><circle cx="938.5" cy="239.6" r="0.7"/><circle cx="938.7" cy="229.4" r="0.7"/><circle cx="940.0" cy="243.6" r="0.7"/><circle cx="941.9" cy="244.4" r="0.9"/><circle cx="934.8" cy="238.2" r="0.5"/><circle cx="941.4" cy="233.7" r="0.6"/><circle cx="933.3" cy="235.1" r="1.1"/><circle cx="942.8" cy="226.8" r="1.0"/><circle cx="941.2" cy="228.6" r="0.4"/><circle cx="943.4" cy="240.4" r="1.0"/><circle cx="941.3" cy="229.2" r="0.6"/><circle cx="939.9" cy="243.0" r="0.8"/><circle cx="949.9" cy="238.6" r="0.4"/><circle cx="946.4" cy="245.6" r="1.0"/><circle cx="945.8" cy="231.1" r="0.5"/><circle cx="946.8" cy="242.0" r="0.9"/><circle cx="930.8" cy="241.2" r="1.0"/><circle cx="945.4" cy="230.7" r="1.0"/><circle cx="945.9" cy="242.0" r="0.8"/><circle cx="937.3" cy="238.7" r="0.6"/><circle cx="954.8" cy="240.6" r="0.9"/><circle cx="954.7" cy="234.8" r="0.7"/><circle cx="942.1" cy="231.3" r="1.0"/><circle cx="945.5" cy="235.2" r="0.4"/><circle cx="945.1" cy="248.3" r="0.7"/><circle cx="954.4" cy="239.7" r="1.0"/><circle cx="940.5" cy="239.6" r="1.0"/><circle cx="939.7" cy="238.3" r="0.6"/><circle cx="934.7" cy="230.7" r="0.7"/><circle cx="939.4" cy="234.6" r="0.6"/><circle cx="949.4" cy="234.7" r="0.5"/><circle cx="939.3" cy="236.6" r="0.5"/><circle cx="933.8" cy="241.6" r="0.8"/><circle cx="940.8" cy="231.0" r="0.4"/><circle cx="942.5" cy="236.1" r="0.7"/><circle cx="934.7" cy="245.0" r="0.9"/><circle cx="943.6" cy="249.1" r="0.9"/><circle cx="938.4" cy="239.8" r="1.0"/><circle cx="940.5" cy="237.2" r="0.6"/><circle cx="949.0" cy="238.5" r="0.7"/><circle cx="945.7" cy="228.0" r="0.8"/><circle cx="942.9" cy="236.6" r="0.5"/><circle cx="954.1" cy="237.3" r="0.4"/><circle cx="948.8" cy="240.8" r="1.1"/><circle cx="944.9" cy="249.1" r="1.1"/><circle cx="935.3" cy="229.8" r="0.6"/></g><circle cx="977" cy="239" r="11" fill="url(#lgb)"/><g fill="#fff" opacity="0.9"><circle cx="977.8" cy="236.8" r="0.6"/><circle cx="984.8" cy="240.2" r="0.6"/><circle cx="980.5" cy="241.8" r="0.4"/><circle cx="973.8" cy="235.8" r="0.6"/><circle cx="984.4" cy="231.7" r="0.3"/><circle cx="981.4" cy="231.8" r="0.6"/><circle cx="969.1" cy="235.9" r="0.5"/><circle cx="977.9" cy="234.1" r="0.3"/><circle cx="971.8" cy="234.9" r="0.5"/><circle cx="985.6" cy="236.3" r="0.3"/><circle cx="981.3" cy="230.5" r="0.5"/><circle cx="982.8" cy="239.9" r="0.4"/><circle cx="974.0" cy="237.0" r="0.7"/><circle cx="971.3" cy="234.8" r="0.3"/><circle cx="975.9" cy="229.6" r="0.6"/><circle cx="981.9" cy="238.5" r="0.4"/><circle cx="977.3" cy="233.3" r="0.5"/><circle cx="985.7" cy="235.2" r="0.3"/><circle cx="980.0" cy="237.1" r="0.6"/><circle cx="971.1" cy="233.1" r="0.5"/><circle cx="970.5" cy="239.0" r="0.6"/><circle cx="984.4" cy="233.0" r="0.6"/><circle cx="984.8" cy="232.7" r="0.6"/><circle cx="985.1" cy="237.1" r="0.6"/><circle cx="968.5" cy="238.8" r="0.4"/><circle cx="983.2" cy="234.4" r="0.6"/><circle cx="976.9" cy="239.8" r="0.4"/><circle cx="975.6" cy="237.9" r="0.5"/><circle cx="985.0" cy="235.3" r="0.7"/><circle cx="977.7" cy="229.6" r="0.7"/><circle cx="977.1" cy="232.3" r="0.4"/><circle cx="975.8" cy="236.5" r="0.4"/><circle cx="984.2" cy="231.6" r="0.4"/><circle cx="978.1" cy="229.9" r="0.7"/><circle cx="979.0" cy="231.1" r="0.3"/><circle cx="979.6" cy="232.5" r="0.6"/><circle cx="972.1" cy="239.8" r="0.7"/><circle cx="980.9" cy="240.3" r="0.6"/><circle cx="967.6" cy="234.4" r="0.5"/><circle cx="984.1" cy="233.0" r="0.7"/></g><path d="M834,265.5h14" stroke="#555" stroke-width="1"/><rect x="866" y="263" width="18" height="3" fill="#444"/><g fill="#000" opacity="0.6"><circle cx="910.9" cy="263.0" r="0.4"/><circle cx="909.5" cy="261.7" r="0.4"/><circle cx="907.9" cy="258.1" r="0.4"/><circle cx="905.2" cy="263.3" r="0.6"/><circle cx="908.9" cy="258.5" r="0.4"/><circle cx="909.0" cy="262.7" r="0.6"/><circle cx="909.6" cy="264.0" r="0.7"/><circle cx="906.6" cy="259.6" r="0.6"/><circle cx="905.6" cy="260.1" r="0.4"/><circle cx="910.2" cy="262.4" r="0.3"/></g><path d="M935,259l3,7M945,261l-3,5" stroke="#9a9a9a" stroke-width="1.300"/><path d="M967,260l2,6M976,261l-3,5" stroke="#aaa" stroke-width="1.300"/><path d="M953.5,117.5h5M956,115v5" stroke="#1a1a50" stroke-width="1.200"/><path d="M987.5,117.5h5M990,115v5" stroke="#1a1a50" stroke-width="1.200"/><path d="M851.5,151.5h5M854,149v5" stroke="#1a1a50" stroke-width="1.200"/><path d="M885.5,151.5h5M888,149v5" stroke="#1a1a50" stroke-width="1.200"/><path d="M919.5,151.5h5M922,149v5" stroke="#1a1a50" stroke-width="1.200"/><path d="M953.5,151.5h5M956,149v5" stroke="#1a1a50" stroke-width="1.200"/><path d="M987.5,151.5h5M990,149v5" stroke="#1a1a50" stroke-width="1.200"/><path d="M851.5,185.5h5M854,183v5" stroke="#1a1a50" stroke-width="1.200"/><path d="M885.5,185.5h5M888,183v5" stroke="#6a2020" stroke-width="1.200"/><path d="M919.5,185.5h5M922,183v5" stroke="#6a2020" stroke-width="1.200"/><path d="M953.5,185.5h5M956,183v5" stroke="#6a2020" stroke-width="1.200"/><path d="M987.5,185.5h5M990,183v5" stroke="#6a2020" stroke-width="1.200"/><path d="M851.5,219.5h5M854,217v5" stroke="#6a1010" stroke-width="1.200"/><path d="M919.5,219.5h5M922,217v5" stroke="#111" stroke-width="1.200"/><path d="M953.5,219.5h5M956,217v5" stroke="#111" stroke-width="1.200"/><path d="M851.5,253.5h5M854,251v5" stroke="#111" stroke-width="1.200"/><path d="M885.5,253.5h5M888,251v5" stroke="#111" stroke-width="1.200"/><path d="M919.5,253.5h5M922,251v5" stroke="#5a1010" stroke-width="1.200"/><path d="M953.5,253.5h5M956,251v5" stroke="#5a1010" stroke-width="1.200"/><path d="M987.5,253.5h5M990,251v5" stroke="#5a1010" stroke-width="1.200"/><path d="M925,115v4.500h-4.500z" fill="#8c9ad8"/><path d="M891,217v4.500h-4.500z" fill="#e07a84"/></g>
</svg>
<!-- basic dropdown -->
<div class="a" style="left:825px;top:269.500px;width:193px;height:17px;background:#1f1f1f;border-radius:2px"></div>
<div class="t" style="transform:scaleX(0.8701);transform-origin:0 0;left:826.200px;top:272px">Basic,</div>
<svg style="left:1004.500px;top:275px" width="10" height="7" viewBox="0 0 13 9"><path d="M1,1.500l5.500,5.500l5.500,-5.500" fill="none" stroke="#e8e8e8" stroke-width="1.800"/></svg>
<!-- spacing -->
<div class="a" style="left:823px;top:290px;width:196px;height:17px;background:#303030;border:1px solid #6a6a6a"></div>
<div class="a" style="left:824px;top:291px;width:5.500px;height:15px;background:#5a5a5a"></div><div class="a" style="left:829.500px;top:291px;width:1px;height:15px;background:#161616"></div>
<div class="t" style="transform:scaleX(0.9230);transform-origin:0 0;left:823.800px;top:291.800px">Spacing</div>
<div class="t" style="transform:scaleX(0.9562);transform-origin:0 0;left:984.300px;top:291.800px">10.0</div>
<svg style="left:1008px;top:291px" width="10" height="15" viewBox="0 0 10 15"><path d="M1.500,6l3.500,-3.500l3.500,3.500M1.500,9.500l3.500,3.500l3.500,-3.500" fill="none" stroke="#e0e0e0" stroke-width="1.600"/></svg>
<!-- brush buttons -->
<svg style="left:820px;top:308px" width="201" height="30" viewBox="820 308 201 30">
<g fill="none" stroke="#c4c4c4" stroke-width="1.400">
<path d="M831.500,317h7M831.500,320.500h5M831.500,325.500h12"/>
<path d="M838,322l6.500,-7l2,2l-6.500,7l-2.500,0.500z" fill="#c4c4c4" stroke="none"/>
<path d="M866.500,315.500h6l3.500,3.500v8.500h-9.500z M864,316.500h5M866.500,314v5"/>
<rect x="898.500" y="315.500" width="7" height="6" stroke="#9a9a9a"/><rect x="902.500" y="319.500" width="7" height="6" stroke="#9a9a9a"/>
<path d="M976,318.500a5.200,5.200 0 1 0 0.500,4.500" stroke-width="2"/>
<path d="M997.500,320v-5.500h7.500l4,4v2" />
</g>
<path d="M973,315l5.500,-1l-0.500,6z" fill="#c4c4c4"/>
<rect x="931.500" y="314" width="13" height="13" fill="#9a9a9a"/>
<path d="M931.500,314h13v13h-13z" fill="url(#chk)" opacity="0.500"/>
<path d="M934,316.500l8,8M942,316.500l-8,8" stroke="#2e2e2e" stroke-width="2.4"/>
<path d="M996,320.500h14v7h-14z" fill="#b0b0b0"/>
<path d="M996,320.500h14v7h-14z" fill="url(#chk)" opacity="0.600"/>
<defs><pattern id="chk" width="2" height="2" patternUnits="userSpaceOnUse"><rect width="1" height="1" fill="#fff"/><rect x="1" y="1" width="1" height="1" fill="#fff"/></pattern></defs>
</svg>
<!-- handle -->
<div class="a" style="left:912px;top:334px;width:4px;height:2px;background:#9a9a9a"></div>
<div class="a" style="left:919px;top:334px;width:4px;height:2px;background:#9a9a9a"></div>
<div class="a" style="left:926px;top:334px;width:4px;height:2px;background:#9a9a9a"></div>

<!-- layers tabs -->
<div class="a" style="left:874px;top:340px;width:113px;height:18px;background:#2d2d2d"></div>
<div class="a" style="left:821px;top:358px;width:200px;height:1px;background:#5a5a5a"></div>
<div class="a" style="left:821px;top:338px;width:54px;height:21px;background:#454545;border:1px solid #5c5c5c;border-bottom:none"></div>
<div class="a" style="left:938px;top:340px;width:1px;height:18px;background:#4a4a4a"></div>
<svg style="left:820px;top:336px" width="201" height="24" viewBox="820 336 201 24">
<g fill="#c8c8c8">
<path d="M825,341.500h11l-1.500,3h-11z M825,346h11l-1.500,3h-11z M825,350.500h11l-1.500,3h-11z"/>
</g>
<rect x="876.500" y="342.500" width="11" height="11" fill="none" stroke="#c8c8c8" stroke-width="1.200"/>
<path d="M880,343v10M884,343v10" stroke="#c8c8c8" stroke-width="1.200"/>
<g fill="none" stroke="#c8c8c8" stroke-width="1.500"><path d="M942,344.500c4,0 6,0 10,0 M943.500,353c0.500,-4 2,-6.500 3.500,-6.500c1.500,0 3,2.500 3.500,6.500" /></g>
<rect x="940.500" y="343" width="3" height="3" fill="#c8c8c8"/><rect x="950.500" y="343" width="3" height="3" fill="#c8c8c8"/>
<rect x="1008.500" y="343.500" width="9" height="9" fill="none" stroke="#a8a8a8" stroke-width="1"/>
<path d="M1016,345v6.500l-5.500,-3.250z" fill="#b8b8b8"/>
</svg>
<div class="t" style="transform:scaleX(0.9590);transform-origin:0 0;left:837px;top:341px">Layers</div>
<div class="t" style="transform:scaleX(0.9265);transform-origin:0 0;left:890.200px;top:341.800px">Channels</div>
<div class="t" style="transform:scaleX(0.9712);transform-origin:0 0;left:954.700px;top:341.800px">Paths</div>
<!-- mode -->
<div class="a" style="left:823px;top:362px;width:152px;height:25px;background:#1f1f1f;border:1px solid #2e2e2e;border-radius:3px"></div>
<div class="t" style="transform:scaleX(0.9474);transform-origin:0 0;left:828.700px;top:367.700px">Mode</div>
<div class="t" style="transform:scaleX(0.9314);transform-origin:0 0;left:915.800px;top:367.700px">Normal</div>
<svg style="left:956px;top:370px" width="13" height="9" viewBox="0 0 13 9"><path d="M1,1.500l5.500,5.500l5.500,-5.500" fill="none" stroke="#e8e8e8" stroke-width="1.800"/></svg>
<div class="a" style="left:978px;top:362px;width:41px;height:25px;background:#1f1f1f;border:1px solid #2e2e2e;border-radius:3px"></div>
<svg style="left:981px;top:366px" width="16" height="16" viewBox="0 0 16 16"><path d="M4,5.500a4.300,4.300 0 1 1 4,7.500" fill="none" stroke="#c8c8c8" stroke-width="1.600"/><path d="M1.500,4l5,-0.500l-1.500,5z" fill="#c8c8c8"/><circle cx="4.500" cy="11.500" r="1.700" fill="#c8c8c8"/></svg>
<svg style="left:1001px;top:370px" width="13" height="9" viewBox="0 0 13 9"><path d="M1,1.500l5.500,5.500l5.500,-5.500" fill="none" stroke="#e8e8e8" stroke-width="1.800"/></svg>
<!-- opacity -->
<div class="a" style="left:823px;top:389px;width:196px;height:17px;background:#5c5c5c;border:1px solid #7a7a7a"></div>
<div class="a" style="left:1007px;top:390px;width:11px;height:15px;background:#2a2a2a"></div>
<div class="t" style="transform:scaleX(0.9786);transform-origin:0 0;left:824.200px;top:390.800px">Opacity</div>
<div class="t" style="transform:scaleX(0.9609);transform-origin:0 0;left:978.300px;top:390.800px">100.0</div>
<svg style="left:1008px;top:390px" width="10" height="15" viewBox="0 0 10 15"><path d="M1.500,6l3.500,-3.500l3.500,3.500" fill="none" stroke="#7a7a7a" stroke-width="1.600"/><path d="M1.500,9.500l3.500,3.500l3.500,-3.500" fill="none" stroke="#e0e0e0" stroke-width="1.600"/></svg>
<!-- lock -->
<div class="t" style="transform:scaleX(0.9363);transform-origin:0 0;left:821.800px;top:411.400px">Lock:</div>
<svg style="left:850px;top:408px" width="70" height="22" viewBox="850 408 70 22">
<path d="M866,412.500c-1,3 -4,7.500 -6.500,10l-1.700,-1.200c1.500,-3 5.500,-7.300 8.200,-8.800z M857,422l1.800,1.300c-0.500,1.700 -2.500,2.500 -4.500,2.200c1.200,-1 0.800,-3 2.700,-3.500z" fill="#c4c4c4"/>
<path d="M884,412l2.800,3.200h-2v3h3v-2l3.200,2.800l-3.200,2.800v-2h-3v3h2l-2.800,3.200l-2.800,-3.200h2v-3h-3v2l-3.200,-2.800l3.200,-2.800v2h3v-3h-2z" fill="#c4c4c4"/>
<rect x="902" y="412" width="13" height="13" fill="#8a8a8a"/>
<path d="M902,412h3.250v3.250h-3.250z M908.500,412h3.250v3.250h-3.250z M905.250,415.250h3.250v3.250h-3.250z M911.750,415.250h3.250v3.250h-3.250z M902,418.500h3.250v3.250h-3.250z M908.500,418.500h3.250v3.250h-3.250z M905.250,421.750h3.250v3.250h-3.250z M911.750,421.750h3.250v3.250h-3.250z" fill="#5e5e5e"/>
</svg>
<!-- layer list -->
<div class="a" style="left:823px;top:432px;width:196px;height:208px;background:#303030"></div>
<div class="a" style="left:823px;top:432px;width:196px;height:39px;background:#1f1f1f"></div>
<svg style="left:828px;top:444px" width="20" height="16" viewBox="0 0 20 16"><path d="M1,8c3,-5.500 15,-5.500 18,0c-3,5.500 -15,5.500 -18,0z" fill="none" stroke="#d0d0d0" stroke-width="1.700"/><circle cx="10" cy="8" r="3.200" fill="#d0d0d0"/><circle cx="9" cy="7" r="1.100" fill="#1f1f1f"/></svg>
<div class="a" style="left:898.500px;top:434px;width:36.500px;height:35.500px;background:#fff"></div><svg style="left:900.500px;top:436px" width="32.500" height="31.500" viewBox="0 0 500 500" preserveAspectRatio="none"><use href="#pic"/></svg>
<div class="a" style="left:939px;top:445.500px;width:80px;height:16px;overflow:hidden"><div class="t" style="transform:scaleX(1.0417);transform-origin:0 0;left:0;top:0px;font-weight:bold;font-size:12px;color:#f0f0f0">651182538_c.jpg</div></div>
<!-- h scroll -->
<div class="a" style="left:823px;top:640px;width:196px;height:14px;background:#262626"></div>
<div class="a" style="left:824px;top:641px;width:175px;height:12px;background:#5e5e5e;border-radius:3px"></div>
<!-- bottom buttons -->
<svg style="left:820px;top:656px" width="201" height="23" viewBox="820 656 201 23">
<g fill="none" stroke="#c4c4c4" stroke-width="1.400">
<path d="M830.500,663.500h6l3.500,3.500v8h-9.500z M828,664.500h5M830.500,662v5"/>
<rect x="925.500" y="663.500" width="7" height="6" stroke="#9a9a9a"/><rect x="929.500" y="667.500" width="7" height="6" stroke="#9a9a9a"/>
<path d="M876.500,671.500l6,-6l6,6 M900.500,665.500l6,6l6,-6" stroke-width="1.700"/>
</g>
<path d="M852,662.500h5l1.500,2h6.500v10h-13z" fill="#c4c4c4"/>
<path d="M855.500,669.500h6M858.500,666.500v6" stroke="#454545" stroke-width="1.500"/>
<g fill="#c4c4c4">
<path d="M949.500,662.500h7.500l-1,2.500h-7.500z M949.500,666.500h7.500l-1,2.500h-7.500z M949.500,670.500h7.500l-1,2.500h-7.500z"/>
<path d="M960.500,662.500v9.500" stroke="#c4c4c4" stroke-width="1.500"/><path d="M957.500,670.500h6l-3,4z"/>
<path d="M973.500,661.500h9v5c0,3 -2,4.500 -4.500,4.500s-4.500,-1.500 -4.500,-4.500z"/>
<path d="M971,675.500l3,-4.500h11l-2.500,4.500z"/>
<rect x="999.500" y="662.500" width="12" height="12" rx="1"/>
</g>
<circle cx="976.300" cy="664.500" r="0.900" fill="#454545"/><circle cx="979.800" cy="664.500" r="0.900" fill="#454545"/><path d="M975.500,667.500c1.500,1.500 3.500,1.500 5,0" stroke="#454545" stroke-width="0.900" fill="none"/>
<path d="M1002,665l7,7M1009,665l-7,7" stroke="#3a3a3a" stroke-width="2"/>
</svg>
</body></html>
